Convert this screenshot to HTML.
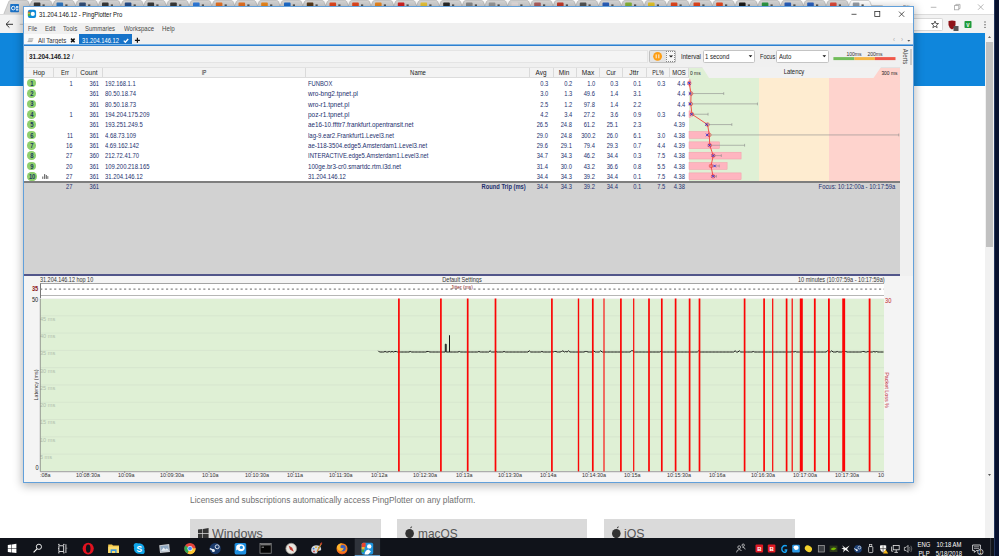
<!DOCTYPE html>
<html><head><meta charset="utf-8"><title>PingPlotter Pro</title>
<style>
html,body{margin:0;padding:0;}
body{width:999px;height:556px;overflow:hidden;position:relative;background:#fff;font-family:"Liberation Sans",sans-serif;}
div{box-sizing:border-box;}
svg{position:absolute;left:0;top:0;}
</style></head><body>

<!-- browser behind -->
<div style="position:absolute;left:0.00px;top:0.00px;width:994.00px;height:15.00px;background:#ffffff;"></div>
<svg width="999" height="16" viewBox="0 0 999 16"><path d="M3.4 15 L8.8 1.6 Q9.3 0.5 10.6 0.5 L26.4 0.5 Q27.7 0.5 28.2 1.6 L33.6 15 Z" fill="#d6d6d6" stroke="#a4a4a4" stroke-width="0.5"/><rect x="10.2" y="4" width="8.8" height="8.2" rx="0.8" fill="#1a72c7"/><circle cx="13.3" cy="8.1" r="1.8" fill="none" stroke="#fff" stroke-width="0.9"/><rect x="16" y="6" width="2.4" height="2" fill="#cfe4f8"/><rect x="16" y="8.6" width="2.4" height="2" fill="#cfe4f8"/><path d="M26.1 15 L31.5 1.6 Q32.0 0.5 33.4 0.5 L49.1 0.5 Q50.5 0.5 51.0 1.6 L56.3 15 Z" fill="#d6d6d6" stroke="#a4a4a4" stroke-width="0.5"/><rect x="33.8" y="2.6" width="6.6" height="4.6" rx="0.8" fill="#3a3a3a"/><rect x="42.5" y="4.4" width="2.2" height="1.6" fill="#555"/><path d="M48.9 15 L54.3 1.6 Q54.8 0.5 56.1 0.5 L71.9 0.5 Q73.2 0.5 73.7 1.6 L79.1 15 Z" fill="#d6d6d6" stroke="#a4a4a4" stroke-width="0.5"/><rect x="56.5" y="2.6" width="6.6" height="4.6" rx="0.8" fill="#2f78c4"/><rect x="65.3" y="4.4" width="2.2" height="1.6" fill="#555"/><path d="M71.7 15 L77.1 1.6 Q77.6 0.5 78.9 0.5 L94.7 0.5 Q96.0 0.5 96.5 1.6 L101.9 15 Z" fill="#d6d6d6" stroke="#a4a4a4" stroke-width="0.5"/><rect x="79.2" y="2.6" width="6.6" height="4.6" rx="0.8" fill="#34507a"/><rect x="88.1" y="4.4" width="2.2" height="1.6" fill="#555"/><path d="M94.4 15 L99.8 1.6 Q100.3 0.5 101.6 0.5 L117.4 0.5 Q118.7 0.5 119.2 1.6 L124.6 15 Z" fill="#d6d6d6" stroke="#a4a4a4" stroke-width="0.5"/><rect x="102.0" y="2.6" width="6.6" height="4.6" rx="0.8" fill="#3a3a3a"/><rect x="110.8" y="4.4" width="2.2" height="1.6" fill="#555"/><path d="M117.2 15 L122.6 1.6 Q123.1 0.5 124.4 0.5 L140.2 0.5 Q141.5 0.5 142.0 1.6 L147.3 15 Z" fill="#d6d6d6" stroke="#a4a4a4" stroke-width="0.5"/><rect x="124.8" y="2.6" width="6.6" height="4.6" rx="0.8" fill="#27508f"/><rect x="133.6" y="4.4" width="2.2" height="1.6" fill="#555"/><path d="M139.9 15 L145.3 1.6 Q145.8 0.5 147.1 0.5 L162.9 0.5 Q164.2 0.5 164.7 1.6 L170.1 15 Z" fill="#d6d6d6" stroke="#a4a4a4" stroke-width="0.5"/><rect x="147.5" y="2.6" width="6.6" height="4.6" rx="0.8" fill="#3a3a3a"/><rect x="156.3" y="4.4" width="2.2" height="1.6" fill="#555"/><path d="M162.7 15 L168.1 1.6 Q168.6 0.5 169.8 0.5 L185.7 0.5 Q187.0 0.5 187.5 1.6 L192.8 15 Z" fill="#d6d6d6" stroke="#a4a4a4" stroke-width="0.5"/><rect x="170.2" y="2.6" width="6.6" height="4.6" rx="0.8" fill="#3a3a3a"/><rect x="179.1" y="4.4" width="2.2" height="1.6" fill="#555"/><path d="M185.4 15 L190.8 1.6 Q191.3 0.5 192.6 0.5 L208.4 0.5 Q209.7 0.5 210.2 1.6 L215.6 15 Z" fill="#d6d6d6" stroke="#a4a4a4" stroke-width="0.5"/><rect x="193.0" y="2.6" width="6.6" height="4.6" rx="0.8" fill="#2f7de0"/><rect x="201.8" y="4.4" width="2.2" height="1.6" fill="#555"/><path d="M208.2 15 L213.6 1.6 Q214.1 0.5 215.3 0.5 L231.2 0.5 Q232.5 0.5 233.0 1.6 L238.3 15 Z" fill="#d6d6d6" stroke="#a4a4a4" stroke-width="0.5"/><rect x="215.8" y="2.6" width="6.6" height="4.6" rx="0.8" fill="#ea7424"/><rect x="224.6" y="4.4" width="2.2" height="1.6" fill="#555"/><path d="M230.9 15 L236.3 1.6 Q236.8 0.5 238.1 0.5 L253.9 0.5 Q255.2 0.5 255.7 1.6 L261.1 15 Z" fill="#d6d6d6" stroke="#a4a4a4" stroke-width="0.5"/><rect x="238.5" y="2.6" width="6.6" height="4.6" rx="0.8" fill="#ea7424"/><rect x="247.3" y="4.4" width="2.2" height="1.6" fill="#555"/><path d="M253.7 15 L259.1 1.6 Q259.6 0.5 260.9 0.5 L276.6 0.5 Q277.9 0.5 278.4 1.6 L283.9 15 Z" fill="#d6d6d6" stroke="#a4a4a4" stroke-width="0.5"/><rect x="261.2" y="2.6" width="6.6" height="4.6" rx="0.8" fill="#f08a1c"/><rect x="270.1" y="4.4" width="2.2" height="1.6" fill="#555"/><path d="M276.4 15 L281.8 1.6 Q282.3 0.5 283.6 0.5 L299.4 0.5 Q300.7 0.5 301.2 1.6 L306.6 15 Z" fill="#d6d6d6" stroke="#a4a4a4" stroke-width="0.5"/><rect x="284.0" y="2.6" width="6.6" height="4.6" rx="0.8" fill="#1f6fd0"/><rect x="292.8" y="4.4" width="2.2" height="1.6" fill="#555"/><path d="M299.1 15 L304.5 1.6 Q305.0 0.5 306.3 0.5 L322.1 0.5 Q323.4 0.5 323.9 1.6 L329.3 15 Z" fill="#d6d6d6" stroke="#a4a4a4" stroke-width="0.5"/><rect x="306.8" y="2.6" width="6.6" height="4.6" rx="0.8" fill="#5a3a1a"/><rect x="315.5" y="4.4" width="2.2" height="1.6" fill="#555"/><path d="M321.9 15 L327.3 1.6 Q327.8 0.5 329.1 0.5 L344.9 0.5 Q346.2 0.5 346.7 1.6 L352.1 15 Z" fill="#d6d6d6" stroke="#a4a4a4" stroke-width="0.5"/><rect x="329.5" y="2.6" width="6.6" height="4.6" rx="0.8" fill="#e8481f"/><rect x="338.3" y="4.4" width="2.2" height="1.6" fill="#555"/><path d="M344.6 15 L350.0 1.6 Q350.5 0.5 351.8 0.5 L367.6 0.5 Q368.9 0.5 369.4 1.6 L374.8 15 Z" fill="#d6d6d6" stroke="#a4a4a4" stroke-width="0.5"/><rect x="352.2" y="2.6" width="6.6" height="4.6" rx="0.8" fill="#e8481f"/><rect x="361.0" y="4.4" width="2.2" height="1.6" fill="#555"/><path d="M367.4 15 L372.8 1.6 Q373.3 0.5 374.6 0.5 L390.4 0.5 Q391.7 0.5 392.2 1.6 L397.6 15 Z" fill="#d6d6d6" stroke="#a4a4a4" stroke-width="0.5"/><rect x="375.0" y="2.6" width="6.6" height="4.6" rx="0.8" fill="#ee8a22"/><rect x="383.8" y="4.4" width="2.2" height="1.6" fill="#555"/><path d="M390.1 15 L395.5 1.6 Q396.0 0.5 397.3 0.5 L413.1 0.5 Q414.4 0.5 414.9 1.6 L420.3 15 Z" fill="#d6d6d6" stroke="#a4a4a4" stroke-width="0.5"/><rect x="397.8" y="2.6" width="6.6" height="4.6" rx="0.8" fill="#d62222"/><rect x="406.5" y="4.4" width="2.2" height="1.6" fill="#555"/><path d="M412.9 15 L418.3 1.6 Q418.8 0.5 420.1 0.5 L435.9 0.5 Q437.2 0.5 437.7 1.6 L443.1 15 Z" fill="#d6d6d6" stroke="#a4a4a4" stroke-width="0.5"/><rect x="420.5" y="2.6" width="6.6" height="4.6" rx="0.8" fill="#ecc83a"/><rect x="429.3" y="4.4" width="2.2" height="1.6" fill="#555"/><path d="M435.6 15 L441.0 1.6 Q441.5 0.5 442.8 0.5 L458.6 0.5 Q459.9 0.5 460.4 1.6 L465.8 15 Z" fill="#d6d6d6" stroke="#a4a4a4" stroke-width="0.5"/><rect x="443.2" y="2.6" width="6.6" height="4.6" rx="0.8" fill="#2a2a2a"/><rect x="452.0" y="4.4" width="2.2" height="1.6" fill="#555"/><path d="M458.4 15 L463.8 1.6 Q464.3 0.5 465.6 0.5 L481.4 0.5 Q482.7 0.5 483.2 1.6 L488.6 15 Z" fill="#d6d6d6" stroke="#a4a4a4" stroke-width="0.5"/><rect x="466.0" y="2.6" width="6.6" height="4.6" rx="0.8" fill="#8a8a8a"/><rect x="474.8" y="4.4" width="2.2" height="1.6" fill="#555"/><path d="M481.1 15 L486.5 1.6 Q487.0 0.5 488.3 0.5 L504.1 0.5 Q505.4 0.5 505.9 1.6 L511.3 15 Z" fill="#d6d6d6" stroke="#a4a4a4" stroke-width="0.5"/><rect x="488.8" y="2.6" width="6.6" height="4.6" rx="0.8" fill="#9a9a9a"/><rect x="497.5" y="4.4" width="2.2" height="1.6" fill="#555"/><path d="M503.9 15 L509.3 1.6 Q509.8 0.5 511.1 0.5 L526.9 0.5 Q528.2 0.5 528.7 1.6 L534.1 15 Z" fill="#d6d6d6" stroke="#a4a4a4" stroke-width="0.5"/><rect x="511.5" y="2.6" width="6.6" height="4.6" rx="0.8" fill="#e8e0e0"/><rect x="520.3" y="4.4" width="2.2" height="1.6" fill="#555"/><path d="M526.6 15 L532.0 1.6 Q532.5 0.5 533.9 0.5 L549.6 0.5 Q550.9 0.5 551.4 1.6 L556.9 15 Z" fill="#d6d6d6" stroke="#a4a4a4" stroke-width="0.5"/><rect x="534.2" y="2.6" width="6.6" height="4.6" rx="0.8" fill="#b06060"/><rect x="543.0" y="4.4" width="2.2" height="1.6" fill="#555"/><path d="M549.4 15 L554.8 1.6 Q555.3 0.5 556.6 0.5 L572.4 0.5 Q573.7 0.5 574.2 1.6 L579.6 15 Z" fill="#d6d6d6" stroke="#a4a4a4" stroke-width="0.5"/><rect x="557.0" y="2.6" width="6.6" height="4.6" rx="0.8" fill="#c63b2b"/><rect x="565.8" y="4.4" width="2.2" height="1.6" fill="#555"/><path d="M572.1 15 L577.5 1.6 Q578.0 0.5 579.4 0.5 L595.1 0.5 Q596.4 0.5 596.9 1.6 L602.4 15 Z" fill="#d6d6d6" stroke="#a4a4a4" stroke-width="0.5"/><rect x="579.8" y="2.6" width="6.6" height="4.6" rx="0.8" fill="#555"/><rect x="588.5" y="4.4" width="2.2" height="1.6" fill="#555"/><path d="M594.9 15 L600.3 1.6 Q600.8 0.5 602.1 0.5 L617.9 0.5 Q619.2 0.5 619.7 1.6 L625.1 15 Z" fill="#d6d6d6" stroke="#a4a4a4" stroke-width="0.5"/><rect x="602.5" y="2.6" width="6.6" height="4.6" rx="0.8" fill="#2a62c0"/><rect x="611.3" y="4.4" width="2.2" height="1.6" fill="#555"/><path d="M617.6 15 L623.0 1.6 Q623.5 0.5 624.9 0.5 L640.6 0.5 Q641.9 0.5 642.4 1.6 L647.9 15 Z" fill="#d6d6d6" stroke="#a4a4a4" stroke-width="0.5"/><rect x="625.2" y="2.6" width="6.6" height="4.6" rx="0.8" fill="#8ab83a"/><rect x="634.0" y="4.4" width="2.2" height="1.6" fill="#555"/><path d="M640.4 15 L645.8 1.6 Q646.3 0.5 647.6 0.5 L663.4 0.5 Q664.7 0.5 665.2 1.6 L670.6 15 Z" fill="#d6d6d6" stroke="#a4a4a4" stroke-width="0.5"/><rect x="648.0" y="2.6" width="6.6" height="4.6" rx="0.8" fill="#e8c82a"/><rect x="656.8" y="4.4" width="2.2" height="1.6" fill="#555"/><path d="M663.1 15 L668.5 1.6 Q669.0 0.5 670.4 0.5 L686.1 0.5 Q687.4 0.5 687.9 1.6 L693.4 15 Z" fill="#d6d6d6" stroke="#a4a4a4" stroke-width="0.5"/><rect x="670.8" y="2.6" width="6.6" height="4.6" rx="0.8" fill="#e8481f"/><rect x="679.5" y="4.4" width="2.2" height="1.6" fill="#555"/><path d="M685.9 15 L691.3 1.6 Q691.8 0.5 693.1 0.5 L708.9 0.5 Q710.2 0.5 710.7 1.6 L716.1 15 Z" fill="#d6d6d6" stroke="#a4a4a4" stroke-width="0.5"/><rect x="693.5" y="2.6" width="6.6" height="4.6" rx="0.8" fill="#e8481f"/><rect x="702.3" y="4.4" width="2.2" height="1.6" fill="#555"/><path d="M708.6 15 L714.0 1.6 Q714.5 0.5 715.9 0.5 L731.6 0.5 Q732.9 0.5 733.4 1.6 L738.9 15 Z" fill="#d6d6d6" stroke="#a4a4a4" stroke-width="0.5"/><rect x="716.2" y="2.6" width="6.6" height="4.6" rx="0.8" fill="#e8481f"/><rect x="725.0" y="4.4" width="2.2" height="1.6" fill="#555"/><path d="M731.4 15 L736.8 1.6 Q737.3 0.5 738.6 0.5 L754.4 0.5 Q755.7 0.5 756.2 1.6 L761.6 15 Z" fill="#d6d6d6" stroke="#a4a4a4" stroke-width="0.5"/><rect x="739.0" y="2.6" width="6.6" height="4.6" rx="0.8" fill="#1a1a1a"/><rect x="747.8" y="4.4" width="2.2" height="1.6" fill="#555"/><path d="M754.1 15 L759.5 1.6 Q760.0 0.5 761.4 0.5 L777.1 0.5 Q778.4 0.5 778.9 1.6 L784.4 15 Z" fill="#d6d6d6" stroke="#a4a4a4" stroke-width="0.5"/><rect x="761.8" y="2.6" width="6.6" height="4.6" rx="0.8" fill="#2e9a46"/><rect x="770.5" y="4.4" width="2.2" height="1.6" fill="#555"/><path d="M776.9 15 L782.3 1.6 Q782.8 0.5 784.1 0.5 L799.9 0.5 Q801.2 0.5 801.7 1.6 L807.1 15 Z" fill="#d6d6d6" stroke="#a4a4a4" stroke-width="0.5"/><rect x="784.5" y="2.6" width="6.6" height="4.6" rx="0.8" fill="#2a62c0"/><rect x="793.3" y="4.4" width="2.2" height="1.6" fill="#555"/><path d="M799.6 15 L805.0 1.6 Q805.5 0.5 806.9 0.5 L822.6 0.5 Q823.9 0.5 824.4 1.6 L829.9 15 Z" fill="#d6d6d6" stroke="#a4a4a4" stroke-width="0.5"/><rect x="807.2" y="2.6" width="6.6" height="4.6" rx="0.8" fill="#2a62c0"/><rect x="816.0" y="4.4" width="2.2" height="1.6" fill="#555"/><path d="M822.4 15 L827.8 1.6 Q828.3 0.5 829.6 0.5 L845.4 0.5 Q846.7 0.5 847.2 1.6 L852.6 15 Z" fill="#d6d6d6" stroke="#a4a4a4" stroke-width="0.5"/><rect x="830.0" y="2.6" width="6.6" height="4.6" rx="0.8" fill="#e04a3a"/><rect x="838.8" y="4.4" width="2.2" height="1.6" fill="#555"/><path d="M845.1 15 L850.5 1.6 Q851.0 0.5 852.4 0.5 L868.1 0.5 Q869.4 0.5 869.9 1.6 L875.4 15 Z" fill="#ffffff" stroke="#a4a4a4" stroke-width="0.5"/><rect x="852.8" y="2.6" width="6.6" height="4.6" rx="0.8" fill="#9aa0a8"/><rect x="861.5" y="4.4" width="2.2" height="1.6" fill="#555"/><path d="M871.5 5 L882.5 5 L884.5 10.5 L873.5 10.5 Z" fill="#cfcfcf"/></svg>
<div style="position:absolute;top:3.81px;height:7.77px;line-height:7.77px;font-size:5.98px;color:#888;white-space:nowrap;left:903.00px;transform-origin:0 50%;transform:scaleX(0.87);">Filip</div>
<div style="position:absolute;left:0.00px;top:14.00px;width:994.00px;height:19.40px;background:#f2f2f2;border-top:0.8px solid #dcdcdc;"></div>
<div style="position:absolute;left:0.00px;top:33.30px;width:985.00px;height:52.30px;background:#0f86dc;"></div>
<div style="position:absolute;left:985.00px;top:33.30px;width:9.00px;height:504.50px;background:#f1f1f1;"></div>
<div style="position:absolute;left:986.00px;top:42.00px;width:7.20px;height:204.60px;background:#c1c1c1;"></div>
<div style="position:absolute;left:994.00px;top:0.00px;width:5.00px;height:556.00px;background:#07112e;border-left:0.8px solid #24365c;"></div>
<svg width="999" height="16" viewBox="0 0 999 16"><g stroke="#a6a6a6" stroke-width="0.8" fill="none"><path d="M930.8 7.3 L936.4 7.3"/><rect x="954.6" y="5.6" width="4.2" height="4.2" fill="#fff"/><path d="M955.8 5.6 L955.8 4.4 L960 4.4 L960 8.6 L958.8 8.6"/><path d="M978 4.4 L983.4 9.8 M983.4 4.4 L978 9.8"/></g></svg>
<div style="position:absolute;left:900.00px;top:17.50px;width:42.50px;height:13.50px;background:#fff;border:1px solid #d8d8d8;border-left:none;border-radius:0 2px 2px 0;"></div>
<svg width="999" height="40" viewBox="0 0 999 40"><polygon points="935.00,21.00 935.91,23.45 938.52,23.56 936.47,25.18 937.17,27.69 935.00,26.25 932.83,27.69 933.53,25.18 931.48,23.56 934.09,23.45" fill="none" stroke="#3a3a3a" stroke-width="0.8" stroke-linejoin="round"/></svg>
<svg width="999" height="40" viewBox="0 0 999 40"><path d="M948.5 21 Q952 20 955.5 21 L955.5 25 Q955 28 952 29.5 Q949 28 948.5 25 Z" fill="#8e1318"/><rect x="953.5" y="26" width="5" height="5" fill="#555"/><rect x="964.5" y="21" width="7" height="7" rx="0.8" fill="#1f9b3a"/><circle cx="985" cy="22" r="0.7" fill="#555"/><circle cx="985" cy="24.7" r="0.7" fill="#555"/><circle cx="985" cy="27.4" r="0.7" fill="#555"/><path d="M9.4 21 L6 24.3 L9.4 27.6 M6 24.3 L13 24.3" stroke="#333" stroke-width="1" fill="none"/><path d="M19.8 24.3 L23 24.3" stroke="#bbb" stroke-width="0.9"/><path d="M988 38 L989.5 36 L991 38Z" fill="#666"/></svg>
<div style="position:absolute;top:21.66px;height:7.48px;line-height:7.48px;font-size:5.75px;color:#fff;white-space:nowrap;font-weight:bold;left:818.00px;width:300px;text-align:center;transform-origin:50% 50%;transform:scaleX(0.87);">V</div>
<div style="position:absolute;top:494.81px;height:10.79px;line-height:10.79px;font-size:8.3px;color:#707070;white-space:nowrap;left:190.00px;transform-origin:0 50%;transform:scaleX(1.0079);">Licenses and subscriptions automatically access PingPlotter on any platform.</div>
<div style="position:absolute;left:190.20px;top:519.00px;width:190.70px;height:19.00px;background:#dadada;"></div>
<div style="position:absolute;top:524.72px;height:17.16px;line-height:17.16px;font-size:13.2px;color:#555;white-space:nowrap;left:211.80px;transform-origin:0 50%;transform:scaleX(0.9487);">Windows</div>
<div style="position:absolute;left:396.80px;top:519.00px;width:190.70px;height:19.00px;background:#dadada;"></div>
<div style="position:absolute;top:524.72px;height:17.16px;line-height:17.16px;font-size:13.2px;color:#555;white-space:nowrap;left:417.60px;transform-origin:0 50%;transform:scaleX(0.8998);">macOS</div>
<div style="position:absolute;left:604.40px;top:519.00px;width:190.70px;height:19.00px;background:#dadada;"></div>
<div style="position:absolute;top:524.72px;height:17.16px;line-height:17.16px;font-size:13.2px;color:#555;white-space:nowrap;left:624.20px;transform-origin:0 50%;transform:scaleX(0.9362);">iOS</div>
<svg width="999" height="556" viewBox="0 0 999 556"><g fill="#333"><path d="M198 529.6 L202.4 529 L202.4 533.3 L198 533.3Z M203 528.9 L208.6 528.1 L208.6 533.3 L203 533.3Z M198 533.9 L202.4 533.9 L202.4 538 L198 538Z M203 533.9 L208.6 533.9 L208.6 538 L203 538Z"/><ellipse cx="409.6" cy="533.6" rx="4.3" ry="4.6"/><path d="M410 528.5 Q410.3 526.6 412.2 526.2 Q412 528.2 410 528.5Z"/><ellipse cx="616.3" cy="533.6" rx="4.3" ry="4.6"/><path d="M616.7 528.5 Q617 526.6 618.9 526.2 Q618.7 528.2 616.7 528.5Z"/></g><path d="M988 474 L991 474 L989.5 476Z" fill="#555"/></svg>
<div style="position:absolute;left:0.00px;top:538.40px;width:994.00px;height:17.60px;background:#10131a;"></div>
<svg width="999" height="556" viewBox="0 0 999 556"><rect x="354.7" y="538.4" width="25.4" height="17.6" fill="#2f333b"/><rect x="354.7" y="555.2" width="25.4" height="0.8" fill="#76b9ed"/><g fill="#fff"><path d="M7.8 545 L11.4 544.5 L11.4 548.2 L7.8 548.2Z M11.9 544.4 L16.4 543.8 L16.4 548.2 L11.9 548.2Z M7.8 548.8 L11.4 548.8 L11.4 552.4 L7.8 551.9Z M11.9 548.8 L16.4 548.8 L16.4 553.1 L11.9 552.5Z"/></g><circle cx="38.9" cy="546.8" r="2.6" fill="none" stroke="#fff" stroke-width="0.9"/><path d="M37 548.8 L33.6 552.4" stroke="#fff" stroke-width="1.1"/><g stroke="#fff" stroke-width="0.8" fill="none"><rect x="58.9" y="545.8" width="4.8" height="5.6"/><path d="M58 544.4 L59.6 544.4 M63 544.4 L64.6 544.4 M58 552.8 L59.6 552.8 M63 552.8 L64.6 552.8 M58 548.6 L58.9 548.6 M65.9 544.2 L65.9 553 M66.6 548.2 L67.2 548.2"/></g><ellipse cx="88.2" cy="548.6" rx="5.6" ry="5.8" fill="#e3121f"/><ellipse cx="88.2" cy="548.6" rx="2.3" ry="4.2" fill="#10131a"/><path d="M108.2 544.6 L112 544.6 L113 545.6 L119 545.6 L119 553 L108.2 553Z" fill="#f6c94a"/><rect x="108.2" y="546.6" width="10.8" height="6.4" fill="#fbdc6f"/><rect x="110.6" y="549.3" width="6" height="3.7" fill="#3d9be0"/><rect x="112" y="551" width="3.2" height="2" fill="#fbdc6f"/><circle cx="139.2" cy="548.5" r="5.3" fill="#10a6ea"/><circle cx="136.3" cy="545.6" r="2.6" fill="#10a6ea"/><circle cx="142.1" cy="551.4" r="2.6" fill="#10a6ea"/><text x="139.2" y="551.5" font-size="8.4" font-weight="bold" text-anchor="middle" fill="#fff" font-family="Liberation Sans, sans-serif">S</text><rect x="159.6" y="544.6" width="10" height="8" fill="#c9cdd2" transform="rotate(-6 164.6 548.6)"/><rect x="160.6" y="545.6" width="8" height="5.4" fill="#8fa8c2" transform="rotate(-6 164.6 548.6)"/><path d="M161 551 L163.6 547.6 L165.4 549.6 L166.8 548.2 L169 550.6Z" fill="#e9eef2"/><circle cx="190" cy="548.5" r="5.6" fill="#e5443a"/><path d="M190 548.5 L185.2 545.6 A5.6 5.6 0 0 0 187.6 553.6Z" fill="#2da94f"/><path d="M190 548.5 L187.6 553.6 A5.6 5.6 0 0 0 195.6 548.2Z" fill="#fcc934"/><circle cx="190" cy="548.5" r="2.5" fill="#fff"/><circle cx="190" cy="548.5" r="1.9" fill="#4a8af4"/><circle cx="215.2" cy="548.6" r="5.6" fill="#1a3a6b"/><circle cx="217.2" cy="546.8" r="2" fill="none" stroke="#e8eef5" stroke-width="0.9"/><circle cx="213.4" cy="550.6" r="1.5" fill="#e8eef5"/><path d="M209.8 548.6 L213.4 550.2" stroke="#e8eef5" stroke-width="1.4"/><rect x="234.6" y="543" width="11.6" height="11.4" rx="1.6" fill="#1e8fe0"/><path d="M236.2 547.4 Q236 544.4 240 544.2 Q244.8 544.2 244.8 548 Q244.6 551 241 551.2 Q238 551 237.8 549.4 L236.2 550.6Z" fill="#fff"/><circle cx="241.4" cy="547.4" r="1.6" fill="#1e8fe0"/><rect x="260" y="543.6" width="11.2" height="9.6" fill="#050505" stroke="#9a9a9a" stroke-width="0.7"/><rect x="260.4" y="543.9" width="10.4" height="1.5" fill="#777"/><path d="M261.6 547.2 L264 547.2" stroke="#ddd" stroke-width="0.7"/><circle cx="291.2" cy="548.6" r="5.3" fill="#e9e6df" stroke="#9d9a94" stroke-width="0.8"/><path d="M288.6 545.6 L292.2 547.8 L293.8 551.8 L290 549.4Z" fill="#c23a2f"/><path d="M311.2 550.2 Q311 545.6 316 545.2 Q321.4 545.4 321.2 549.4 Q320.8 551.2 318.4 550.8 Q317 550.8 317.4 552.2 Q317.4 553.8 315 553.6 Q311.4 553.2 311.2 550.2Z" fill="#cfd6de"/><circle cx="313.6" cy="548.6" r="0.9" fill="#3a78d0"/><circle cx="316" cy="547.2" r="0.9" fill="#e0b030"/><circle cx="318.8" cy="547.8" r="0.9" fill="#48a848"/><circle cx="314" cy="551.4" r="0.9" fill="#d04040"/><path d="M317 551.6 L321.2 543.6" stroke="#d08a30" stroke-width="1.2"/><path d="M320.6 544.6 L321.8 542.6" stroke="#c0392b" stroke-width="1.3"/><circle cx="342" cy="548.7" r="5.5" fill="#f57c1a"/><circle cx="342.6" cy="548.2" r="3.1" fill="#3a5fc0"/><path d="M336.8 547 Q338 543.4 342 543.2 Q339.6 545.4 340.4 547.6 Q342 548.6 343.6 547.8 Q343.4 550.8 340.6 551 Q337.4 550.6 336.8 547Z" fill="#ffb52e"/><path d="M337 551 Q342 556 347 551 Q346 553.8 342 554.2 Q338.6 554 337 551Z" fill="#e8402a"/><rect x="361.6" y="542.8" width="11.6" height="11.6" rx="1.6" fill="#1e94dd"/><path d="M361.6 544.4 Q361.6 542.8 363.2 542.8 L365.6 542.8 L365.6 547 L361.6 547Z" fill="#e9452c"/><rect x="361.6" y="547" width="3" height="2.6" fill="#f4b62f"/><rect x="361.6" y="549.6" width="2.4" height="2.6" fill="#47a844"/><circle cx="369.2" cy="546.4" r="2.2" fill="#fff"/><path d="M364.6 554.4 Q365 549.8 368.6 549.4 L371 551.6 L368.2 554.4Z" fill="#fff"/><g stroke="#e6e6e6" stroke-width="0.7" fill="none"><circle cx="739.2" cy="547.2" r="1.4"/><path d="M736.6 552.4 Q736.8 549.6 739.2 549.6 Q741 549.6 741.4 551"/><circle cx="743.2" cy="545.2" r="1.2"/><path d="M742.4 547.4 Q744.8 547 745.2 549.4"/></g><rect x="755.5" y="544.6" width="7.6" height="8" rx="1" fill="#e01b24"/><text x="759.3" y="551" font-size="6" font-weight="bold" text-anchor="middle" fill="#fff" font-family="Liberation Sans, sans-serif">B</text><rect x="767.8000000000001" y="544.6" width="7.6" height="8" rx="1" fill="#e01b24"/><text x="771.6" y="551" font-size="6" font-weight="bold" text-anchor="middle" fill="#fff" font-family="Liberation Sans, sans-serif">B</text><path d="M786.8 546 Q783.8 544.6 782 547.6 Q781.2 551 784 552.2 Q786.4 552.6 786.6 550 L784.6 550" stroke="#17a2f2" stroke-width="1.4" fill="none"/><rect x="792.2" y="544.8" width="7.6" height="7.6" rx="1" fill="#2a98e4"/><path d="M793.4 547.6 Q793.6 545.6 796 545.6 Q798.8 545.8 798.6 548.2 Q798.2 550 796 550 Q794.6 550 794.4 549Z" fill="#fff"/><ellipse cx="808.4" cy="548.8" rx="3.8" ry="3" fill="#f3d22b" transform="rotate(35 808.4 548.8)"/><rect x="818.3" y="545.4" width="6" height="6.6" fill="#3a3d42" stroke="#a8a8a8" stroke-width="0.7"/><rect x="829.6" y="545.6" width="7.8" height="6.4" fill="#2d3a1c"/><path d="M830.6 549 Q833.4 546 836.4 548.6 Q833.4 551.6 830.6 549Z" fill="#76b900"/><path d="M842 545.2 L845.6 548 L849.6 545.6 L847 549 L849.4 552.2 L845.4 550 L843 552.4 L843.8 549.4 L841.4 548.4 L843.6 547.8Z" fill="#f2f2f2"/><circle cx="858" cy="548.8" r="3.9" fill="#1c3f74"/><circle cx="859.4" cy="547.6" r="1.4" fill="none" stroke="#e8eef5" stroke-width="0.7"/><circle cx="856.8" cy="550.2" r="1" fill="#e8eef5"/><path d="M854.2 548.6 L856.8 550" stroke="#e8eef5" stroke-width="1"/><rect x="868.6" y="546.6" width="4.2" height="6" rx="0.8" fill="none" stroke="#dcdcdc" stroke-width="0.8"/><rect x="869.6" y="544.4" width="2.2" height="2.2" fill="none" stroke="#dcdcdc" stroke-width="0.7"/><path d="M880 545.4 Q883 544.8 886.2 545.4 L886.2 549 Q885.6 551.6 883.1 552.8 Q880.6 551.6 880 549Z" fill="#f4f4f4"/><path d="M883.1 545 L883.1 552.8 M880 548.6 L886.2 548.6" stroke="#333" stroke-width="0.6"/><path d="M885.6 549.6 L888.2 553.6 L883 553.6Z" fill="#f3b71c"/><g stroke="#e6e6e6" stroke-width="0.8" fill="none"><rect x="893.2" y="545.4" width="6" height="4.4"/><path d="M894.4 552.4 L898 552.4 M896.2 549.8 L896.2 552.4 M891.6 546.6 L891.6 551.2 L893.2 551.2"/></g><path d="M904.4 547.4 L906 547.4 L908 545.4 L908 552.4 L906 550.4 L904.4 550.4Z" fill="none" stroke="#e6e6e6" stroke-width="0.7"/><path d="M909.4 547 Q910.6 548.9 909.4 550.8 M910.8 545.8 Q912.8 548.9 910.8 552" stroke="#9a9a9a" stroke-width="0.6" fill="none"/><path d="M972.6 545 L980.4 545 L980.4 550.6 L976.2 550.6 L974.4 552.4 L974.4 550.6 L972.6 550.6Z" fill="none" stroke="#f0f0f0" stroke-width="0.8"/><path d="M974 546.8 L979 546.8 M974 548.4 L979 548.4" stroke="#f0f0f0" stroke-width="0.6"/><circle cx="980.4" cy="552" r="2.7" fill="#10131a" stroke="#f0f0f0" stroke-width="0.7"/><text x="980.4" y="553.8" font-size="4.6" text-anchor="middle" fill="#fff" font-family="Liberation Sans, sans-serif">1</text><path d="M990.6 538 L990.6 556" stroke="#555a62" stroke-width="0.6"/></svg>
<div style="position:absolute;top:540.99px;height:8.83px;line-height:8.83px;font-size:6.79px;color:#fff;white-space:nowrap;left:773.50px;width:300px;text-align:center;transform-origin:50% 50%;transform:scaleX(0.87);">ENG</div>
<div style="position:absolute;top:550.09px;height:8.83px;line-height:8.83px;font-size:6.79px;color:#fff;white-space:nowrap;left:773.50px;width:300px;text-align:center;transform-origin:50% 50%;transform:scaleX(0.87);">PLP</div>
<div style="position:absolute;top:540.78px;height:8.83px;line-height:8.83px;font-size:6.79px;color:#fff;white-space:nowrap;left:799.30px;width:300px;text-align:center;transform-origin:50% 50%;transform:scaleX(0.87);">10:18 AM</div>
<div style="position:absolute;top:550.09px;height:8.83px;line-height:8.83px;font-size:6.79px;color:#fff;white-space:nowrap;left:799.30px;width:300px;text-align:center;transform-origin:50% 50%;transform:scaleX(0.87);">5/18/2018</div>
<!-- window -->
<div style="position:absolute;left:17.90px;top:2.90px;width:901.40px;height:487.20px;background:transparent;box-shadow:0 2px 9px 1px rgba(0,0,0,0.28);left:22.9px;top:5.9px;width:891.4px;height:477.2px;"></div>
<div style="position:absolute;left:22.90px;top:5.90px;width:891.40px;height:477.20px;background:#f0f0f0;border:1.3px solid #62a0da;"></div>
<div style="position:absolute;left:24.20px;top:7.20px;width:888.80px;height:15.50px;background:#ffffff;"></div>
<svg width="200" height="30" viewBox="0 0 200 30"><rect x="27.9" y="9.8" width="8.2" height="8.1" rx="1.9" fill="#0c8bd9"/><rect x="27.9" y="11.7" width="2.4" height="1" fill="#f0481e"/><rect x="27.9" y="12.7" width="2.4" height="1.1" fill="#f3c81e"/><rect x="27.9" y="13.8" width="2.4" height="2.1" fill="#4fb53a"/><circle cx="32.8" cy="13.9" r="2.05" fill="#fff"/></svg>
<div style="position:absolute;top:9.95px;height:9.11px;line-height:9.11px;font-size:7.01px;color:#111;white-space:nowrap;left:38.50px;transform-origin:0 50%;transform:scaleX(0.8492);">31.204.146.12 - PingPlotter Pro</div>
<svg width="999" height="30" viewBox="0 0 999 30"><g stroke="#222" stroke-width="0.75" fill="none"><path d="M851.5 14.3 L856.5 14.3"/><rect x="874.8" y="11.6" width="5" height="5"/><path d="M899 11.6 L904.2 16.8 M904.2 11.6 L899 16.8"/></g></svg>
<div style="position:absolute;top:24.91px;height:8.97px;line-height:8.97px;font-size:6.9px;color:#4a4a4a;white-space:nowrap;left:27.60px;transform-origin:0 50%;transform:scaleX(0.8184);">File</div>
<div style="position:absolute;top:24.91px;height:8.97px;line-height:8.97px;font-size:6.9px;color:#4a4a4a;white-space:nowrap;left:44.60px;transform-origin:0 50%;transform:scaleX(0.8831);">Edit</div>
<div style="position:absolute;top:24.91px;height:8.97px;line-height:8.97px;font-size:6.9px;color:#4a4a4a;white-space:nowrap;left:63.00px;transform-origin:0 50%;transform:scaleX(0.8815);">Tools</div>
<div style="position:absolute;top:24.91px;height:8.97px;line-height:8.97px;font-size:6.9px;color:#4a4a4a;white-space:nowrap;left:85.40px;transform-origin:0 50%;transform:scaleX(0.8627);">Summaries</div>
<div style="position:absolute;top:24.91px;height:8.97px;line-height:8.97px;font-size:6.9px;color:#4a4a4a;white-space:nowrap;left:123.70px;transform-origin:0 50%;transform:scaleX(0.8753);">Workspace</div>
<div style="position:absolute;top:24.91px;height:8.97px;line-height:8.97px;font-size:6.9px;color:#4a4a4a;white-space:nowrap;left:161.50px;transform-origin:0 50%;transform:scaleX(0.8949);">Help</div>
<div style="position:absolute;left:24.20px;top:34.20px;width:54.70px;height:9.90px;background:#fafafa;"></div>
<svg width="200" height="50" viewBox="0 0 200 50"><g stroke="#888" stroke-width="0.7"><path d="M28.6 38.8 L33.4 38.8 M28.1 40.2 L32.9 40.2 M27.6 41.6 L32.4 41.6"/></g><path d="M71 38.6 L74.6 42.2 M74.6 38.6 L71 42.2" stroke="#111" stroke-width="1.5"/></svg>
<div style="position:absolute;top:36.81px;height:8.97px;line-height:8.97px;font-size:6.9px;color:#333;white-space:nowrap;left:37.80px;transform-origin:0 50%;transform:scaleX(0.8819);">All Targets</div>
<div style="position:absolute;left:78.90px;top:34.20px;width:52.90px;height:11.30px;background:#1673c9;"></div>
<div style="position:absolute;top:36.81px;height:8.97px;line-height:8.97px;font-size:6.9px;color:#fff;white-space:nowrap;left:82.00px;transform-origin:0 50%;transform:scaleX(0.8362);">31.204.146.12</div>
<svg width="200" height="50" viewBox="0 0 200 50"><path d="M123.8 40.6 L125.3 42.2 L128.2 39" stroke="#fff" stroke-width="1.3" fill="none"/><path d="M134.9 40.3 L139.9 40.3 M137.4 37.8 L137.4 42.8" stroke="#111" stroke-width="1.2"/></svg>
<div style="position:absolute;left:24.20px;top:44.00px;width:888.80px;height:1.90px;background:#2f80cf;border-top:0.7px solid #7fb6e6;"></div>
<div style="position:absolute;top:36.41px;height:8.97px;line-height:8.97px;font-size:6.9px;color:#aaa;white-space:nowrap;left:743.50px;width:300px;text-align:center;transform-origin:50% 50%;transform:scaleX(0.87);">‹</div>
<div style="position:absolute;top:36.41px;height:8.97px;line-height:8.97px;font-size:6.9px;color:#aaa;white-space:nowrap;left:751.50px;width:300px;text-align:center;transform-origin:50% 50%;transform:scaleX(0.87);">›</div>
<svg width="999" height="50" viewBox="0 0 999 50"><path d="M907.3 40 L910.3 40 L908.8 41.8Z" fill="#555"/></svg>
<div style="position:absolute;left:26.00px;top:49.60px;width:621.50px;height:13.20px;background:#f4f4f4;border:1px solid #e4e4e4;"></div>
<div style="position:absolute;top:52.91px;height:8.97px;line-height:8.97px;font-size:6.9px;color:#222;white-space:nowrap;font-weight:bold;left:28.50px;transform-origin:0 50%;transform:scaleX(0.9314);">31.204.146.12</div>
<div style="position:absolute;top:52.91px;height:8.97px;line-height:8.97px;font-size:6.9px;color:#444;white-space:nowrap;left:72.00px;transform-origin:0 50%;transform:scaleX(0.87);">/</div>
<div style="position:absolute;left:649.30px;top:50.00px;width:27.20px;height:12.50px;background:#e4e4e4;border:0.8px solid #bebebe;border-radius:1.6px;"></div>
<div style="position:absolute;left:665.80px;top:51.00px;width:9.40px;height:10.60px;background:#f6f6f6;border:0.6px dotted #888;"></div>
<svg width="999" height="70" viewBox="0 0 999 70"><circle cx="657.6" cy="56.3" r="4.4" fill="#fd9d12"/><rect x="655.7" y="54.4" width="0.9" height="3.9" fill="#fff"/><rect x="658.4" y="54.4" width="0.9" height="3.9" fill="#fff"/><path d="M668.9 55.4 L673.1 55.4 L671 57.4Z" fill="#111"/></svg>
<div style="position:absolute;top:52.71px;height:8.97px;line-height:8.97px;font-size:6.9px;color:#222;white-space:nowrap;left:681.10px;transform-origin:0 50%;transform:scaleX(0.8839);">Interval</div>
<div style="position:absolute;left:702.60px;top:50.00px;width:52.30px;height:12.50px;background:#fff;border:0.8px solid #c4c4c4;border-radius:1.6px;"></div>
<div style="position:absolute;top:52.71px;height:8.97px;line-height:8.97px;font-size:6.9px;color:#222;white-space:nowrap;left:705.40px;transform-origin:0 50%;transform:scaleX(0.8677);">1 second</div>
<div style="position:absolute;top:52.71px;height:8.97px;line-height:8.97px;font-size:6.9px;color:#222;white-space:nowrap;left:760.00px;transform-origin:0 50%;transform:scaleX(0.8143);">Focus</div>
<div style="position:absolute;left:776.40px;top:50.00px;width:52.50px;height:12.50px;background:#fff;border:0.8px solid #c4c4c4;border-radius:1.6px;"></div>
<div style="position:absolute;top:52.71px;height:8.97px;line-height:8.97px;font-size:6.9px;color:#222;white-space:nowrap;left:779.20px;transform-origin:0 50%;transform:scaleX(0.87);">Auto</div>
<svg width="999" height="70" viewBox="0 0 999 70"><path d="M748.7 55.2 L752.3 55.2 L750.5 57.3Z" fill="#111"/><path d="M822.5 55.2 L826.1 55.2 L824.3 57.3Z" fill="#111"/><rect x="833.4" y="57.1" width="21" height="3" fill="#72bd5a"/><rect x="854.4" y="57.1" width="20.5" height="3" fill="#f5b544"/><rect x="874.9" y="57.1" width="20.6" height="3" fill="#f0584a"/></svg>
<div style="position:absolute;top:51.04px;height:7.32px;line-height:7.32px;font-size:5.63px;color:#333;white-space:nowrap;left:704.00px;width:300px;text-align:center;transform-origin:50% 50%;transform:scaleX(0.8995);">100ms</div>
<div style="position:absolute;top:51.04px;height:7.32px;line-height:7.32px;font-size:5.63px;color:#333;white-space:nowrap;left:724.60px;width:300px;text-align:center;transform-origin:50% 50%;transform:scaleX(0.8995);">200ms</div>
<div style="position:absolute;top:52.41px;height:8.97px;line-height:8.97px;font-size:6.9px;color:#444;white-space:nowrap;left:755.20px;width:300px;text-align:center;transform-origin:50% 50%;transform:rotate(90deg) scaleX(0.8731);">Alerts</div>
<div style="position:absolute;left:909.50px;top:49.40px;width:2.30px;height:15.20px;background:#cbcbcb;"></div>
<div style="position:absolute;left:24.20px;top:67.00px;width:875.50px;height:11.00px;background:#f3f3f3;border-top:0.8px solid #e2e2e2;border-bottom:0.7px solid #dcdcdc;"></div>
<div style="position:absolute;left:24.20px;top:78.00px;width:664.60px;height:104.00px;background:#ffffff;"></div>
<div style="position:absolute;left:52.60px;top:68.30px;width:0.80px;height:9.20px;background:#dadada;"></div>
<div style="position:absolute;left:75.80px;top:68.30px;width:0.80px;height:9.20px;background:#dadada;"></div>
<div style="position:absolute;left:101.60px;top:68.30px;width:0.80px;height:9.20px;background:#dadada;"></div>
<div style="position:absolute;left:305.00px;top:68.30px;width:0.80px;height:9.20px;background:#dadada;"></div>
<div style="position:absolute;left:529.10px;top:68.30px;width:0.80px;height:9.20px;background:#dadada;"></div>
<div style="position:absolute;left:552.50px;top:68.30px;width:0.80px;height:9.20px;background:#dadada;"></div>
<div style="position:absolute;left:575.60px;top:68.30px;width:0.80px;height:9.20px;background:#dadada;"></div>
<div style="position:absolute;left:599.00px;top:68.30px;width:0.80px;height:9.20px;background:#dadada;"></div>
<div style="position:absolute;left:622.20px;top:68.30px;width:0.80px;height:9.20px;background:#dadada;"></div>
<div style="position:absolute;left:645.60px;top:68.30px;width:0.80px;height:9.20px;background:#dadada;"></div>
<div style="position:absolute;left:668.80px;top:68.30px;width:0.80px;height:9.20px;background:#dadada;"></div>
<div style="position:absolute;left:688.20px;top:68.30px;width:0.80px;height:9.20px;background:#dadada;"></div>
<div style="position:absolute;top:68.98px;height:8.83px;line-height:8.83px;font-size:6.79px;color:#222;white-space:nowrap;left:-110.70px;width:300px;text-align:center;transform-origin:50% 50%;transform:scaleX(0.9473);">Hop</div>
<div style="position:absolute;top:68.98px;height:8.83px;line-height:8.83px;font-size:6.79px;color:#222;white-space:nowrap;left:-85.00px;width:300px;text-align:center;transform-origin:50% 50%;transform:scaleX(0.8727);">Err</div>
<div style="position:absolute;top:68.98px;height:8.83px;line-height:8.83px;font-size:6.79px;color:#222;white-space:nowrap;left:-60.60px;width:300px;text-align:center;transform-origin:50% 50%;transform:scaleX(0.9548);">Count</div>
<div style="position:absolute;top:68.98px;height:8.83px;line-height:8.83px;font-size:6.79px;color:#222;white-space:nowrap;left:53.50px;width:300px;text-align:center;transform-origin:50% 50%;transform:scaleX(0.7326);">IP</div>
<div style="position:absolute;top:68.98px;height:8.83px;line-height:8.83px;font-size:6.79px;color:#222;white-space:nowrap;left:267.50px;width:300px;text-align:center;transform-origin:50% 50%;transform:scaleX(0.8723);">Name</div>
<div style="position:absolute;top:68.98px;height:8.83px;line-height:8.83px;font-size:6.79px;color:#222;white-space:nowrap;left:391.00px;width:300px;text-align:center;transform-origin:50% 50%;transform:scaleX(0.9414);">Avg</div>
<div style="position:absolute;top:68.98px;height:8.83px;line-height:8.83px;font-size:6.79px;color:#222;white-space:nowrap;left:414.30px;width:300px;text-align:center;transform-origin:50% 50%;transform:scaleX(0.9688);">Min</div>
<div style="position:absolute;top:68.98px;height:8.83px;line-height:8.83px;font-size:6.79px;color:#222;white-space:nowrap;left:437.60px;width:300px;text-align:center;transform-origin:50% 50%;transform:scaleX(0.9667);">Max</div>
<div style="position:absolute;top:68.98px;height:8.83px;line-height:8.83px;font-size:6.79px;color:#222;white-space:nowrap;left:461.00px;width:300px;text-align:center;transform-origin:50% 50%;transform:scaleX(0.8865);">Cur</div>
<div style="position:absolute;top:68.98px;height:8.83px;line-height:8.83px;font-size:6.79px;color:#222;white-space:nowrap;left:484.20px;width:300px;text-align:center;transform-origin:50% 50%;transform:scaleX(0.9863);">Jttr</div>
<div style="position:absolute;top:68.98px;height:8.83px;line-height:8.83px;font-size:6.79px;color:#222;white-space:nowrap;left:507.50px;width:300px;text-align:center;transform-origin:50% 50%;transform:scaleX(0.7948);">PL%</div>
<div style="position:absolute;top:68.98px;height:8.83px;line-height:8.83px;font-size:6.79px;color:#222;white-space:nowrap;left:528.80px;width:300px;text-align:center;transform-origin:50% 50%;transform:scaleX(0.8664);">MOS</div>
<div style="position:absolute;left:27.30px;top:78.90px;width:8.6px;height:8.6px;border-radius:50%;background:#8fcf6e;"></div>
<div style="position:absolute;top:79.78px;height:8.83px;line-height:8.83px;font-size:6.79px;color:#1c3a5e;white-space:nowrap;font-weight:bold;left:-118.40px;width:300px;text-align:center;transform-origin:50% 50%;transform:scaleX(0.87);">1</div>
<div style="position:absolute;top:79.81px;height:8.59px;line-height:8.59px;font-size:6.61px;color:#232f6e;white-space:nowrap;right:926.20px;transform-origin:100% 50%;transform:scaleX(0.87);">1</div>
<div style="position:absolute;top:79.81px;height:8.59px;line-height:8.59px;font-size:6.61px;color:#232f6e;white-space:nowrap;right:900.40px;transform-origin:100% 50%;transform:scaleX(0.87);">361</div>
<div style="position:absolute;top:79.81px;height:8.59px;line-height:8.59px;font-size:6.61px;color:#232f6e;white-space:nowrap;left:105.20px;transform-origin:0 50%;transform:scaleX(0.8763);">192.168.1.1</div>
<div style="position:absolute;top:79.81px;height:8.59px;line-height:8.59px;font-size:6.61px;color:#232f6e;white-space:nowrap;left:307.90px;transform-origin:0 50%;transform:scaleX(0.8822);">FUNBOX</div>
<div style="position:absolute;top:79.81px;height:8.59px;line-height:8.59px;font-size:6.61px;color:#232f6e;white-space:nowrap;right:450.70px;transform-origin:100% 50%;transform:scaleX(0.87);">0.3</div>
<div style="position:absolute;top:79.81px;height:8.59px;line-height:8.59px;font-size:6.61px;color:#232f6e;white-space:nowrap;right:427.30px;transform-origin:100% 50%;transform:scaleX(0.87);">0.2</div>
<div style="position:absolute;top:79.81px;height:8.59px;line-height:8.59px;font-size:6.61px;color:#232f6e;white-space:nowrap;right:403.90px;transform-origin:100% 50%;transform:scaleX(0.87);">1.0</div>
<div style="position:absolute;top:79.81px;height:8.59px;line-height:8.59px;font-size:6.61px;color:#232f6e;white-space:nowrap;right:380.70px;transform-origin:100% 50%;transform:scaleX(0.87);">0.3</div>
<div style="position:absolute;top:79.81px;height:8.59px;line-height:8.59px;font-size:6.61px;color:#232f6e;white-space:nowrap;right:357.50px;transform-origin:100% 50%;transform:scaleX(0.87);">0.1</div>
<div style="position:absolute;top:79.81px;height:8.59px;line-height:8.59px;font-size:6.61px;color:#232f6e;white-space:nowrap;right:334.10px;transform-origin:100% 50%;transform:scaleX(0.87);">0.3</div>
<div style="position:absolute;top:79.81px;height:8.59px;line-height:8.59px;font-size:6.61px;color:#232f6e;white-space:nowrap;right:313.80px;transform-origin:100% 50%;transform:scaleX(0.87);">4.4</div>
<div style="position:absolute;left:27.30px;top:89.25px;width:8.6px;height:8.6px;border-radius:50%;background:#8fcf6e;"></div>
<div style="position:absolute;top:90.13px;height:8.83px;line-height:8.83px;font-size:6.79px;color:#1c3a5e;white-space:nowrap;font-weight:bold;left:-118.40px;width:300px;text-align:center;transform-origin:50% 50%;transform:scaleX(0.87);">2</div>
<div style="position:absolute;top:90.15px;height:8.59px;line-height:8.59px;font-size:6.61px;color:#232f6e;white-space:nowrap;right:900.40px;transform-origin:100% 50%;transform:scaleX(0.87);">361</div>
<div style="position:absolute;top:90.15px;height:8.59px;line-height:8.59px;font-size:6.61px;color:#232f6e;white-space:nowrap;left:105.20px;transform-origin:0 50%;transform:scaleX(0.8906);">80.50.18.74</div>
<div style="position:absolute;top:90.15px;height:8.59px;line-height:8.59px;font-size:6.61px;color:#232f6e;white-space:nowrap;left:307.90px;transform-origin:0 50%;transform:scaleX(0.9789);">wro-bng2.tpnet.pl</div>
<div style="position:absolute;top:90.15px;height:8.59px;line-height:8.59px;font-size:6.61px;color:#232f6e;white-space:nowrap;right:450.70px;transform-origin:100% 50%;transform:scaleX(0.87);">3.0</div>
<div style="position:absolute;top:90.15px;height:8.59px;line-height:8.59px;font-size:6.61px;color:#232f6e;white-space:nowrap;right:427.30px;transform-origin:100% 50%;transform:scaleX(0.87);">1.3</div>
<div style="position:absolute;top:90.15px;height:8.59px;line-height:8.59px;font-size:6.61px;color:#232f6e;white-space:nowrap;right:403.90px;transform-origin:100% 50%;transform:scaleX(0.87);">49.6</div>
<div style="position:absolute;top:90.15px;height:8.59px;line-height:8.59px;font-size:6.61px;color:#232f6e;white-space:nowrap;right:380.70px;transform-origin:100% 50%;transform:scaleX(0.87);">1.4</div>
<div style="position:absolute;top:90.15px;height:8.59px;line-height:8.59px;font-size:6.61px;color:#232f6e;white-space:nowrap;right:357.50px;transform-origin:100% 50%;transform:scaleX(0.87);">3.1</div>
<div style="position:absolute;top:90.15px;height:8.59px;line-height:8.59px;font-size:6.61px;color:#232f6e;white-space:nowrap;right:313.80px;transform-origin:100% 50%;transform:scaleX(0.87);">4.4</div>
<div style="position:absolute;left:27.30px;top:99.59px;width:8.6px;height:8.6px;border-radius:50%;background:#8fcf6e;"></div>
<div style="position:absolute;top:100.47px;height:8.83px;line-height:8.83px;font-size:6.79px;color:#1c3a5e;white-space:nowrap;font-weight:bold;left:-118.40px;width:300px;text-align:center;transform-origin:50% 50%;transform:scaleX(0.87);">3</div>
<div style="position:absolute;top:100.50px;height:8.59px;line-height:8.59px;font-size:6.61px;color:#232f6e;white-space:nowrap;right:900.40px;transform-origin:100% 50%;transform:scaleX(0.87);">361</div>
<div style="position:absolute;top:100.50px;height:8.59px;line-height:8.59px;font-size:6.61px;color:#232f6e;white-space:nowrap;left:105.20px;transform-origin:0 50%;transform:scaleX(0.8906);">80.50.18.73</div>
<div style="position:absolute;top:100.50px;height:8.59px;line-height:8.59px;font-size:6.61px;color:#232f6e;white-space:nowrap;left:307.90px;transform-origin:0 50%;transform:scaleX(0.9799);">wro-r1.tpnet.pl</div>
<div style="position:absolute;top:100.50px;height:8.59px;line-height:8.59px;font-size:6.61px;color:#232f6e;white-space:nowrap;right:450.70px;transform-origin:100% 50%;transform:scaleX(0.87);">2.5</div>
<div style="position:absolute;top:100.50px;height:8.59px;line-height:8.59px;font-size:6.61px;color:#232f6e;white-space:nowrap;right:427.30px;transform-origin:100% 50%;transform:scaleX(0.87);">1.2</div>
<div style="position:absolute;top:100.50px;height:8.59px;line-height:8.59px;font-size:6.61px;color:#232f6e;white-space:nowrap;right:403.90px;transform-origin:100% 50%;transform:scaleX(0.87);">97.8</div>
<div style="position:absolute;top:100.50px;height:8.59px;line-height:8.59px;font-size:6.61px;color:#232f6e;white-space:nowrap;right:380.70px;transform-origin:100% 50%;transform:scaleX(0.87);">1.4</div>
<div style="position:absolute;top:100.50px;height:8.59px;line-height:8.59px;font-size:6.61px;color:#232f6e;white-space:nowrap;right:357.50px;transform-origin:100% 50%;transform:scaleX(0.87);">2.2</div>
<div style="position:absolute;top:100.50px;height:8.59px;line-height:8.59px;font-size:6.61px;color:#232f6e;white-space:nowrap;right:313.80px;transform-origin:100% 50%;transform:scaleX(0.87);">4.4</div>
<div style="position:absolute;left:27.30px;top:109.94px;width:8.6px;height:8.6px;border-radius:50%;background:#8fcf6e;"></div>
<div style="position:absolute;top:110.82px;height:8.83px;line-height:8.83px;font-size:6.79px;color:#1c3a5e;white-space:nowrap;font-weight:bold;left:-118.40px;width:300px;text-align:center;transform-origin:50% 50%;transform:scaleX(0.87);">4</div>
<div style="position:absolute;top:110.84px;height:8.59px;line-height:8.59px;font-size:6.61px;color:#232f6e;white-space:nowrap;right:926.20px;transform-origin:100% 50%;transform:scaleX(0.87);">1</div>
<div style="position:absolute;top:110.84px;height:8.59px;line-height:8.59px;font-size:6.61px;color:#232f6e;white-space:nowrap;right:900.40px;transform-origin:100% 50%;transform:scaleX(0.87);">361</div>
<div style="position:absolute;top:110.84px;height:8.59px;line-height:8.59px;font-size:6.61px;color:#232f6e;white-space:nowrap;left:105.20px;transform-origin:0 50%;transform:scaleX(0.8967);">194.204.175.209</div>
<div style="position:absolute;top:110.84px;height:8.59px;line-height:8.59px;font-size:6.61px;color:#232f6e;white-space:nowrap;left:307.90px;transform-origin:0 50%;transform:scaleX(0.9797);">poz-r1.tpnet.pl</div>
<div style="position:absolute;top:110.84px;height:8.59px;line-height:8.59px;font-size:6.61px;color:#232f6e;white-space:nowrap;right:450.70px;transform-origin:100% 50%;transform:scaleX(0.87);">4.2</div>
<div style="position:absolute;top:110.84px;height:8.59px;line-height:8.59px;font-size:6.61px;color:#232f6e;white-space:nowrap;right:427.30px;transform-origin:100% 50%;transform:scaleX(0.87);">3.4</div>
<div style="position:absolute;top:110.84px;height:8.59px;line-height:8.59px;font-size:6.61px;color:#232f6e;white-space:nowrap;right:403.90px;transform-origin:100% 50%;transform:scaleX(0.87);">27.2</div>
<div style="position:absolute;top:110.84px;height:8.59px;line-height:8.59px;font-size:6.61px;color:#232f6e;white-space:nowrap;right:380.70px;transform-origin:100% 50%;transform:scaleX(0.87);">3.6</div>
<div style="position:absolute;top:110.84px;height:8.59px;line-height:8.59px;font-size:6.61px;color:#232f6e;white-space:nowrap;right:357.50px;transform-origin:100% 50%;transform:scaleX(0.87);">0.9</div>
<div style="position:absolute;top:110.84px;height:8.59px;line-height:8.59px;font-size:6.61px;color:#232f6e;white-space:nowrap;right:334.10px;transform-origin:100% 50%;transform:scaleX(0.87);">0.3</div>
<div style="position:absolute;top:110.84px;height:8.59px;line-height:8.59px;font-size:6.61px;color:#232f6e;white-space:nowrap;right:313.80px;transform-origin:100% 50%;transform:scaleX(0.87);">4.4</div>
<div style="position:absolute;left:27.30px;top:120.28px;width:8.6px;height:8.6px;border-radius:50%;background:#8fcf6e;"></div>
<div style="position:absolute;top:121.17px;height:8.83px;line-height:8.83px;font-size:6.79px;color:#1c3a5e;white-space:nowrap;font-weight:bold;left:-118.40px;width:300px;text-align:center;transform-origin:50% 50%;transform:scaleX(0.87);">5</div>
<div style="position:absolute;top:121.19px;height:8.59px;line-height:8.59px;font-size:6.61px;color:#232f6e;white-space:nowrap;right:900.40px;transform-origin:100% 50%;transform:scaleX(0.87);">361</div>
<div style="position:absolute;top:121.19px;height:8.59px;line-height:8.59px;font-size:6.61px;color:#232f6e;white-space:nowrap;left:105.20px;transform-origin:0 50%;transform:scaleX(0.8918);">193.251.249.5</div>
<div style="position:absolute;top:121.19px;height:8.59px;line-height:8.59px;font-size:6.61px;color:#232f6e;white-space:nowrap;left:307.90px;transform-origin:0 50%;transform:scaleX(0.9527);">ae16-10.ffttr7.frankfurt.opentransit.net</div>
<div style="position:absolute;top:121.19px;height:8.59px;line-height:8.59px;font-size:6.61px;color:#232f6e;white-space:nowrap;right:450.70px;transform-origin:100% 50%;transform:scaleX(0.87);">26.5</div>
<div style="position:absolute;top:121.19px;height:8.59px;line-height:8.59px;font-size:6.61px;color:#232f6e;white-space:nowrap;right:427.30px;transform-origin:100% 50%;transform:scaleX(0.87);">24.8</div>
<div style="position:absolute;top:121.19px;height:8.59px;line-height:8.59px;font-size:6.61px;color:#232f6e;white-space:nowrap;right:403.90px;transform-origin:100% 50%;transform:scaleX(0.87);">61.2</div>
<div style="position:absolute;top:121.19px;height:8.59px;line-height:8.59px;font-size:6.61px;color:#232f6e;white-space:nowrap;right:380.70px;transform-origin:100% 50%;transform:scaleX(0.87);">25.1</div>
<div style="position:absolute;top:121.19px;height:8.59px;line-height:8.59px;font-size:6.61px;color:#232f6e;white-space:nowrap;right:357.50px;transform-origin:100% 50%;transform:scaleX(0.87);">2.3</div>
<div style="position:absolute;top:121.19px;height:8.59px;line-height:8.59px;font-size:6.61px;color:#232f6e;white-space:nowrap;right:313.80px;transform-origin:100% 50%;transform:scaleX(0.87);">4.39</div>
<div style="position:absolute;left:27.30px;top:130.62px;width:8.6px;height:8.6px;border-radius:50%;background:#8fcf6e;"></div>
<div style="position:absolute;top:131.51px;height:8.83px;line-height:8.83px;font-size:6.79px;color:#1c3a5e;white-space:nowrap;font-weight:bold;left:-118.40px;width:300px;text-align:center;transform-origin:50% 50%;transform:scaleX(0.87);">6</div>
<div style="position:absolute;top:131.53px;height:8.59px;line-height:8.59px;font-size:6.61px;color:#232f6e;white-space:nowrap;right:926.20px;transform-origin:100% 50%;transform:scaleX(0.87);">11</div>
<div style="position:absolute;top:131.53px;height:8.59px;line-height:8.59px;font-size:6.61px;color:#232f6e;white-space:nowrap;right:900.40px;transform-origin:100% 50%;transform:scaleX(0.87);">361</div>
<div style="position:absolute;top:131.53px;height:8.59px;line-height:8.59px;font-size:6.61px;color:#232f6e;white-space:nowrap;left:105.20px;transform-origin:0 50%;transform:scaleX(0.8906);">4.68.73.109</div>
<div style="position:absolute;top:131.53px;height:8.59px;line-height:8.59px;font-size:6.61px;color:#232f6e;white-space:nowrap;left:307.90px;transform-origin:0 50%;transform:scaleX(0.9143);">lag-9.ear2.Frankfurt1.Level3.net</div>
<div style="position:absolute;top:131.53px;height:8.59px;line-height:8.59px;font-size:6.61px;color:#232f6e;white-space:nowrap;right:450.70px;transform-origin:100% 50%;transform:scaleX(0.87);">29.0</div>
<div style="position:absolute;top:131.53px;height:8.59px;line-height:8.59px;font-size:6.61px;color:#232f6e;white-space:nowrap;right:427.30px;transform-origin:100% 50%;transform:scaleX(0.87);">24.8</div>
<div style="position:absolute;top:131.53px;height:8.59px;line-height:8.59px;font-size:6.61px;color:#232f6e;white-space:nowrap;right:403.90px;transform-origin:100% 50%;transform:scaleX(0.87);">300.2</div>
<div style="position:absolute;top:131.53px;height:8.59px;line-height:8.59px;font-size:6.61px;color:#232f6e;white-space:nowrap;right:380.70px;transform-origin:100% 50%;transform:scaleX(0.87);">26.0</div>
<div style="position:absolute;top:131.53px;height:8.59px;line-height:8.59px;font-size:6.61px;color:#232f6e;white-space:nowrap;right:357.50px;transform-origin:100% 50%;transform:scaleX(0.87);">6.1</div>
<div style="position:absolute;top:131.53px;height:8.59px;line-height:8.59px;font-size:6.61px;color:#232f6e;white-space:nowrap;right:334.10px;transform-origin:100% 50%;transform:scaleX(0.87);">3.0</div>
<div style="position:absolute;top:131.53px;height:8.59px;line-height:8.59px;font-size:6.61px;color:#232f6e;white-space:nowrap;right:313.80px;transform-origin:100% 50%;transform:scaleX(0.87);">4.38</div>
<div style="position:absolute;left:27.30px;top:140.97px;width:8.6px;height:8.6px;border-radius:50%;background:#8fcf6e;"></div>
<div style="position:absolute;top:141.86px;height:8.83px;line-height:8.83px;font-size:6.79px;color:#1c3a5e;white-space:nowrap;font-weight:bold;left:-118.40px;width:300px;text-align:center;transform-origin:50% 50%;transform:scaleX(0.87);">7</div>
<div style="position:absolute;top:141.88px;height:8.59px;line-height:8.59px;font-size:6.61px;color:#232f6e;white-space:nowrap;right:926.20px;transform-origin:100% 50%;transform:scaleX(0.87);">16</div>
<div style="position:absolute;top:141.88px;height:8.59px;line-height:8.59px;font-size:6.61px;color:#232f6e;white-space:nowrap;right:900.40px;transform-origin:100% 50%;transform:scaleX(0.87);">361</div>
<div style="position:absolute;top:141.88px;height:8.59px;line-height:8.59px;font-size:6.61px;color:#232f6e;white-space:nowrap;left:105.20px;transform-origin:0 50%;transform:scaleX(0.8835);">4.69.162.142</div>
<div style="position:absolute;top:141.88px;height:8.59px;line-height:8.59px;font-size:6.61px;color:#232f6e;white-space:nowrap;left:307.90px;transform-origin:0 50%;transform:scaleX(0.925);">ae-118-3504.edge5.Amsterdam1.Level3.net</div>
<div style="position:absolute;top:141.88px;height:8.59px;line-height:8.59px;font-size:6.61px;color:#232f6e;white-space:nowrap;right:450.70px;transform-origin:100% 50%;transform:scaleX(0.87);">29.6</div>
<div style="position:absolute;top:141.88px;height:8.59px;line-height:8.59px;font-size:6.61px;color:#232f6e;white-space:nowrap;right:427.30px;transform-origin:100% 50%;transform:scaleX(0.87);">29.1</div>
<div style="position:absolute;top:141.88px;height:8.59px;line-height:8.59px;font-size:6.61px;color:#232f6e;white-space:nowrap;right:403.90px;transform-origin:100% 50%;transform:scaleX(0.87);">79.4</div>
<div style="position:absolute;top:141.88px;height:8.59px;line-height:8.59px;font-size:6.61px;color:#232f6e;white-space:nowrap;right:380.70px;transform-origin:100% 50%;transform:scaleX(0.87);">29.3</div>
<div style="position:absolute;top:141.88px;height:8.59px;line-height:8.59px;font-size:6.61px;color:#232f6e;white-space:nowrap;right:357.50px;transform-origin:100% 50%;transform:scaleX(0.87);">0.7</div>
<div style="position:absolute;top:141.88px;height:8.59px;line-height:8.59px;font-size:6.61px;color:#232f6e;white-space:nowrap;right:334.10px;transform-origin:100% 50%;transform:scaleX(0.87);">4.4</div>
<div style="position:absolute;top:141.88px;height:8.59px;line-height:8.59px;font-size:6.61px;color:#232f6e;white-space:nowrap;right:313.80px;transform-origin:100% 50%;transform:scaleX(0.87);">4.39</div>
<div style="position:absolute;left:27.30px;top:151.31px;width:8.6px;height:8.6px;border-radius:50%;background:#8fcf6e;"></div>
<div style="position:absolute;top:152.20px;height:8.83px;line-height:8.83px;font-size:6.79px;color:#1c3a5e;white-space:nowrap;font-weight:bold;left:-118.40px;width:300px;text-align:center;transform-origin:50% 50%;transform:scaleX(0.87);">8</div>
<div style="position:absolute;top:152.22px;height:8.59px;line-height:8.59px;font-size:6.61px;color:#232f6e;white-space:nowrap;right:926.20px;transform-origin:100% 50%;transform:scaleX(0.87);">27</div>
<div style="position:absolute;top:152.22px;height:8.59px;line-height:8.59px;font-size:6.61px;color:#232f6e;white-space:nowrap;right:900.40px;transform-origin:100% 50%;transform:scaleX(0.87);">360</div>
<div style="position:absolute;top:152.22px;height:8.59px;line-height:8.59px;font-size:6.61px;color:#232f6e;white-space:nowrap;left:105.20px;transform-origin:0 50%;transform:scaleX(0.8835);">212.72.41.70</div>
<div style="position:absolute;top:152.22px;height:8.59px;line-height:8.59px;font-size:6.61px;color:#232f6e;white-space:nowrap;left:307.90px;transform-origin:0 50%;transform:scaleX(0.8888);">INTERACTIVE.edge5.Amsterdam1.Level3.net</div>
<div style="position:absolute;top:152.22px;height:8.59px;line-height:8.59px;font-size:6.61px;color:#232f6e;white-space:nowrap;right:450.70px;transform-origin:100% 50%;transform:scaleX(0.87);">34.7</div>
<div style="position:absolute;top:152.22px;height:8.59px;line-height:8.59px;font-size:6.61px;color:#232f6e;white-space:nowrap;right:427.30px;transform-origin:100% 50%;transform:scaleX(0.87);">34.3</div>
<div style="position:absolute;top:152.22px;height:8.59px;line-height:8.59px;font-size:6.61px;color:#232f6e;white-space:nowrap;right:403.90px;transform-origin:100% 50%;transform:scaleX(0.87);">46.2</div>
<div style="position:absolute;top:152.22px;height:8.59px;line-height:8.59px;font-size:6.61px;color:#232f6e;white-space:nowrap;right:380.70px;transform-origin:100% 50%;transform:scaleX(0.87);">34.4</div>
<div style="position:absolute;top:152.22px;height:8.59px;line-height:8.59px;font-size:6.61px;color:#232f6e;white-space:nowrap;right:357.50px;transform-origin:100% 50%;transform:scaleX(0.87);">0.3</div>
<div style="position:absolute;top:152.22px;height:8.59px;line-height:8.59px;font-size:6.61px;color:#232f6e;white-space:nowrap;right:334.10px;transform-origin:100% 50%;transform:scaleX(0.87);">7.5</div>
<div style="position:absolute;top:152.22px;height:8.59px;line-height:8.59px;font-size:6.61px;color:#232f6e;white-space:nowrap;right:313.80px;transform-origin:100% 50%;transform:scaleX(0.87);">4.38</div>
<div style="position:absolute;left:27.30px;top:161.66px;width:8.6px;height:8.6px;border-radius:50%;background:#8fcf6e;"></div>
<div style="position:absolute;top:162.55px;height:8.83px;line-height:8.83px;font-size:6.79px;color:#1c3a5e;white-space:nowrap;font-weight:bold;left:-118.40px;width:300px;text-align:center;transform-origin:50% 50%;transform:scaleX(0.87);">9</div>
<div style="position:absolute;top:162.57px;height:8.59px;line-height:8.59px;font-size:6.61px;color:#232f6e;white-space:nowrap;right:926.20px;transform-origin:100% 50%;transform:scaleX(0.87);">20</div>
<div style="position:absolute;top:162.57px;height:8.59px;line-height:8.59px;font-size:6.61px;color:#232f6e;white-space:nowrap;right:900.40px;transform-origin:100% 50%;transform:scaleX(0.87);">361</div>
<div style="position:absolute;top:162.57px;height:8.59px;line-height:8.59px;font-size:6.61px;color:#232f6e;white-space:nowrap;left:105.20px;transform-origin:0 50%;transform:scaleX(0.8967);">109.200.218.165</div>
<div style="position:absolute;top:162.57px;height:8.59px;line-height:8.59px;font-size:6.61px;color:#232f6e;white-space:nowrap;left:307.90px;transform-origin:0 50%;transform:scaleX(0.9351);">100ge.br3-cr0.smartdc.rtm.i3d.net</div>
<div style="position:absolute;top:162.57px;height:8.59px;line-height:8.59px;font-size:6.61px;color:#232f6e;white-space:nowrap;right:450.70px;transform-origin:100% 50%;transform:scaleX(0.87);">31.4</div>
<div style="position:absolute;top:162.57px;height:8.59px;line-height:8.59px;font-size:6.61px;color:#232f6e;white-space:nowrap;right:427.30px;transform-origin:100% 50%;transform:scaleX(0.87);">30.0</div>
<div style="position:absolute;top:162.57px;height:8.59px;line-height:8.59px;font-size:6.61px;color:#232f6e;white-space:nowrap;right:403.90px;transform-origin:100% 50%;transform:scaleX(0.87);">43.2</div>
<div style="position:absolute;top:162.57px;height:8.59px;line-height:8.59px;font-size:6.61px;color:#232f6e;white-space:nowrap;right:380.70px;transform-origin:100% 50%;transform:scaleX(0.87);">36.6</div>
<div style="position:absolute;top:162.57px;height:8.59px;line-height:8.59px;font-size:6.61px;color:#232f6e;white-space:nowrap;right:357.50px;transform-origin:100% 50%;transform:scaleX(0.87);">0.8</div>
<div style="position:absolute;top:162.57px;height:8.59px;line-height:8.59px;font-size:6.61px;color:#232f6e;white-space:nowrap;right:334.10px;transform-origin:100% 50%;transform:scaleX(0.87);">5.5</div>
<div style="position:absolute;top:162.57px;height:8.59px;line-height:8.59px;font-size:6.61px;color:#232f6e;white-space:nowrap;right:313.80px;transform-origin:100% 50%;transform:scaleX(0.87);">4.38</div>
<div style="position:absolute;left:27.30px;top:172.00px;width:8.6px;height:8.6px;border-radius:50%;background:#8fcf6e;"></div>
<div style="position:absolute;left:27.60px;top:172.00px;width:9.60px;height:8.60px;background:#8fcf6e;border-radius:4.3px;"></div>
<div style="position:absolute;top:172.89px;height:8.83px;line-height:8.83px;font-size:6.79px;color:#1c3a5e;white-space:nowrap;font-weight:bold;letter-spacing:-0.3px;left:-117.60px;width:300px;text-align:center;transform-origin:50% 50%;transform:scaleX(0.87);">10</div>
<div style="position:absolute;top:172.91px;height:8.59px;line-height:8.59px;font-size:6.61px;color:#232f6e;white-space:nowrap;right:926.20px;transform-origin:100% 50%;transform:scaleX(0.87);">27</div>
<div style="position:absolute;top:172.91px;height:8.59px;line-height:8.59px;font-size:6.61px;color:#232f6e;white-space:nowrap;right:900.40px;transform-origin:100% 50%;transform:scaleX(0.87);">361</div>
<div style="position:absolute;top:172.91px;height:8.59px;line-height:8.59px;font-size:6.61px;color:#232f6e;white-space:nowrap;left:105.20px;transform-origin:0 50%;transform:scaleX(0.8918);">31.204.146.12</div>
<div style="position:absolute;top:172.91px;height:8.59px;line-height:8.59px;font-size:6.61px;color:#232f6e;white-space:nowrap;left:307.90px;transform-origin:0 50%;transform:scaleX(0.8966);">31.204.146.12</div>
<div style="position:absolute;top:172.91px;height:8.59px;line-height:8.59px;font-size:6.61px;color:#232f6e;white-space:nowrap;right:450.70px;transform-origin:100% 50%;transform:scaleX(0.87);">34.4</div>
<div style="position:absolute;top:172.91px;height:8.59px;line-height:8.59px;font-size:6.61px;color:#232f6e;white-space:nowrap;right:427.30px;transform-origin:100% 50%;transform:scaleX(0.87);">34.3</div>
<div style="position:absolute;top:172.91px;height:8.59px;line-height:8.59px;font-size:6.61px;color:#232f6e;white-space:nowrap;right:403.90px;transform-origin:100% 50%;transform:scaleX(0.87);">39.2</div>
<div style="position:absolute;top:172.91px;height:8.59px;line-height:8.59px;font-size:6.61px;color:#232f6e;white-space:nowrap;right:380.70px;transform-origin:100% 50%;transform:scaleX(0.87);">34.4</div>
<div style="position:absolute;top:172.91px;height:8.59px;line-height:8.59px;font-size:6.61px;color:#232f6e;white-space:nowrap;right:357.50px;transform-origin:100% 50%;transform:scaleX(0.87);">0.1</div>
<div style="position:absolute;top:172.91px;height:8.59px;line-height:8.59px;font-size:6.61px;color:#232f6e;white-space:nowrap;right:334.10px;transform-origin:100% 50%;transform:scaleX(0.87);">7.5</div>
<div style="position:absolute;top:172.91px;height:8.59px;line-height:8.59px;font-size:6.61px;color:#232f6e;white-space:nowrap;right:313.80px;transform-origin:100% 50%;transform:scaleX(0.87);">4.38</div>
<svg width="100" height="200" viewBox="0 0 100 200"><g fill="#6e6e6e"><rect x="42.2" y="176.5" width="1.1" height="2.4"/><rect x="44" y="174.1" width="1.2" height="4.8"/><rect x="45.8" y="175" width="1.1" height="3.9"/><rect x="47.3" y="176.1" width="1" height="2.8"/></g></svg>
<div style="position:absolute;left:689.00px;top:67.50px;width:70.10px;height:114.00px;background:#dff0d5;"></div>
<div style="position:absolute;left:759.10px;top:67.50px;width:70.10px;height:114.00px;background:#feecd0;"></div>
<div style="position:absolute;left:829.20px;top:67.50px;width:70.50px;height:114.00px;background:#fed3cd;"></div>
<div style="position:absolute;left:899.70px;top:66.80px;width:13.30px;height:207.70px;background:#f0f0f0;"></div>
<div style="position:absolute;left:24.20px;top:181.50px;width:875.50px;height:92.60px;background:#d2d2d2;"></div>
<div style="position:absolute;left:24.20px;top:181.00px;width:875.50px;height:1.80px;background:#7e7e7e;"></div>
<div style="position:absolute;top:182.61px;height:8.59px;line-height:8.59px;font-size:6.61px;color:#232f6e;white-space:nowrap;right:926.20px;transform-origin:100% 50%;transform:scaleX(0.87);">27</div>
<div style="position:absolute;top:182.61px;height:8.59px;line-height:8.59px;font-size:6.61px;color:#232f6e;white-space:nowrap;right:900.40px;transform-origin:100% 50%;transform:scaleX(0.87);">361</div>
<div style="position:absolute;top:182.61px;height:8.59px;line-height:8.59px;font-size:6.61px;color:#232f6e;white-space:nowrap;font-weight:bold;right:473.70px;transform-origin:100% 50%;transform:scaleX(0.87);">Round Trip (ms)</div>
<div style="position:absolute;top:182.61px;height:8.59px;line-height:8.59px;font-size:6.61px;color:#232f6e;white-space:nowrap;right:450.70px;transform-origin:100% 50%;transform:scaleX(0.87);">34.4</div>
<div style="position:absolute;top:182.61px;height:8.59px;line-height:8.59px;font-size:6.61px;color:#232f6e;white-space:nowrap;right:427.30px;transform-origin:100% 50%;transform:scaleX(0.87);">34.3</div>
<div style="position:absolute;top:182.61px;height:8.59px;line-height:8.59px;font-size:6.61px;color:#232f6e;white-space:nowrap;right:403.90px;transform-origin:100% 50%;transform:scaleX(0.87);">39.2</div>
<div style="position:absolute;top:182.61px;height:8.59px;line-height:8.59px;font-size:6.61px;color:#232f6e;white-space:nowrap;right:380.70px;transform-origin:100% 50%;transform:scaleX(0.87);">34.4</div>
<div style="position:absolute;top:182.61px;height:8.59px;line-height:8.59px;font-size:6.61px;color:#232f6e;white-space:nowrap;right:357.50px;transform-origin:100% 50%;transform:scaleX(0.87);">0.1</div>
<div style="position:absolute;top:182.61px;height:8.59px;line-height:8.59px;font-size:6.61px;color:#232f6e;white-space:nowrap;right:334.10px;transform-origin:100% 50%;transform:scaleX(0.87);">7.5</div>
<div style="position:absolute;top:182.61px;height:8.59px;line-height:8.59px;font-size:6.61px;color:#232f6e;white-space:nowrap;right:313.80px;transform-origin:100% 50%;transform:scaleX(0.87);">4.38</div>
<div style="position:absolute;top:182.61px;height:8.59px;line-height:8.59px;font-size:6.61px;color:#232f6e;white-space:nowrap;right:103.20px;transform-origin:100% 50%;transform:scaleX(0.8893);">Focus: 10:12:00a - 10:17:59a</div>
<svg width="999" height="200" viewBox="0 0 999 200"><path d="M702.1 67.0 L881.1 67.0 L873.5 78.0 L709.1 78.0 Z" fill="#f1f1f1"/><rect x="689.0" y="79.80" width="1.70" height="6.8" fill="#ffb5c0" stroke="#f59aa8" stroke-width="0.5"/><rect x="689.0" y="110.84" width="1.70" height="6.8" fill="#ffb5c0" stroke="#f59aa8" stroke-width="0.5"/><rect x="689.0" y="131.53" width="20.60" height="6.8" fill="#ffb5c0" stroke="#f59aa8" stroke-width="0.5"/><rect x="689.0" y="141.87" width="30.40" height="6.8" fill="#ffb5c0" stroke="#f59aa8" stroke-width="0.5"/><rect x="689.0" y="152.22" width="52.10" height="6.8" fill="#ffb5c0" stroke="#f59aa8" stroke-width="0.5"/><rect x="689.0" y="162.56" width="38.10" height="6.8" fill="#ffb5c0" stroke="#f59aa8" stroke-width="0.5"/><rect x="689.0" y="172.91" width="52.10" height="6.8" fill="#ffb5c0" stroke="#f59aa8" stroke-width="0.5"/><path d="M689.14 83.20 L689.70 83.20 M689.70 81.80 L689.70 84.60" stroke="#8a8a8a" stroke-width="0.6" fill="none"/><path d="M689.91 93.55 L723.72 93.55 M723.72 92.14 L723.72 94.95" stroke="#8a8a8a" stroke-width="0.6" fill="none"/><path d="M689.84 103.89 L757.46 103.89 M757.46 102.49 L757.46 105.29" stroke="#8a8a8a" stroke-width="0.6" fill="none"/><path d="M691.38 114.24 L708.04 114.24 M708.04 112.84 L708.04 115.64" stroke="#8a8a8a" stroke-width="0.6" fill="none"/><path d="M706.36 124.58 L731.84 124.58 M731.84 123.18 L731.84 125.98" stroke="#8a8a8a" stroke-width="0.6" fill="none"/><path d="M706.36 134.93 L898.80 134.93 M898.80 133.53 L898.80 136.33" stroke="#8a8a8a" stroke-width="0.6" fill="none"/><path d="M709.37 145.27 L744.58 145.27 M744.58 143.87 L744.58 146.67" stroke="#8a8a8a" stroke-width="0.6" fill="none"/><path d="M713.01 155.62 L721.34 155.62 M721.34 154.22 L721.34 157.02" stroke="#8a8a8a" stroke-width="0.6" fill="none"/><path d="M710.00 165.96 L719.24 165.96 M719.24 164.56 L719.24 167.36" stroke="#8a8a8a" stroke-width="0.6" fill="none"/><path d="M713.01 176.31 L716.44 176.31 M716.44 174.91 L716.44 177.71" stroke="#8a8a8a" stroke-width="0.6" fill="none"/><polyline points="689.21,83.20 691.10,93.55 690.75,103.89 691.94,114.24 707.55,124.58 709.30,134.93 709.72,145.27 713.29,155.62 710.98,165.96 713.08,176.31" fill="none" stroke="#f4544b" stroke-width="1.0"/><circle cx="689.21" cy="83.20" r="1.8" fill="none" stroke="#e8382f" stroke-width="0.6"/><path d="M687.91 81.90 L690.51 84.50 M690.51 81.90 L687.91 84.50" stroke="#1c22d8" stroke-width="0.8"/><circle cx="691.10" cy="93.55" r="1.8" fill="none" stroke="#e8382f" stroke-width="0.6"/><path d="M688.68 92.25 L691.28 94.84 M691.28 92.25 L688.68 94.84" stroke="#1c22d8" stroke-width="0.8"/><circle cx="690.75" cy="103.89" r="1.8" fill="none" stroke="#e8382f" stroke-width="0.6"/><path d="M688.68 102.59 L691.28 105.19 M691.28 102.59 L688.68 105.19" stroke="#1c22d8" stroke-width="0.8"/><circle cx="691.94" cy="114.24" r="1.8" fill="none" stroke="#e8382f" stroke-width="0.6"/><path d="M690.22 112.94 L692.82 115.54 M692.82 112.94 L690.22 115.54" stroke="#1c22d8" stroke-width="0.8"/><circle cx="707.55" cy="124.58" r="1.8" fill="none" stroke="#e8382f" stroke-width="0.6"/><path d="M705.27 123.28 L707.87 125.88 M707.87 123.28 L705.27 125.88" stroke="#1c22d8" stroke-width="0.8"/><circle cx="709.30" cy="134.93" r="1.8" fill="none" stroke="#e8382f" stroke-width="0.6"/><path d="M705.90 133.62 L708.50 136.23 M708.50 133.62 L705.90 136.23" stroke="#1c22d8" stroke-width="0.8"/><circle cx="709.72" cy="145.27" r="1.8" fill="none" stroke="#e8382f" stroke-width="0.6"/><path d="M708.21 143.97 L710.81 146.57 M710.81 143.97 L708.21 146.57" stroke="#1c22d8" stroke-width="0.8"/><circle cx="713.29" cy="155.62" r="1.8" fill="none" stroke="#e8382f" stroke-width="0.6"/><path d="M711.78 154.31 L714.38 156.92 M714.38 154.31 L711.78 156.92" stroke="#1c22d8" stroke-width="0.8"/><circle cx="710.98" cy="165.96" r="1.8" fill="none" stroke="#e8382f" stroke-width="0.6"/><path d="M713.32 164.66 L715.92 167.26 M715.92 164.66 L713.32 167.26" stroke="#1c22d8" stroke-width="0.8"/><circle cx="713.08" cy="176.31" r="1.8" fill="none" stroke="#e8382f" stroke-width="0.6"/><path d="M711.78 175.00 L714.38 177.61 M714.38 175.00 L711.78 177.61" stroke="#1c22d8" stroke-width="0.8"/></svg>
<div style="position:absolute;top:69.64px;height:7.32px;line-height:7.32px;font-size:5.63px;color:#222;white-space:nowrap;left:690.30px;transform-origin:0 50%;transform:scaleX(0.87);">0 ms</div>
<div style="position:absolute;top:69.64px;height:7.32px;line-height:7.32px;font-size:5.63px;color:#222;white-space:nowrap;right:101.20px;transform-origin:100% 50%;transform:scaleX(0.87);">300 ms</div>
<div style="position:absolute;top:68.08px;height:8.83px;line-height:8.83px;font-size:6.79px;color:#222;white-space:nowrap;left:643.60px;width:300px;text-align:center;transform-origin:50% 50%;transform:scaleX(0.87);">Latency</div>
<div style="position:absolute;left:24.20px;top:273.90px;width:875.50px;height:2.00px;background:#52568a;"></div>
<div style="position:absolute;left:24.20px;top:275.60px;width:888.80px;height:206.20px;background:#f4f4f4;"></div>
<div style="position:absolute;top:275.51px;height:8.37px;line-height:8.37px;font-size:6.44px;color:#333;white-space:nowrap;left:40.20px;transform-origin:0 50%;transform:scaleX(0.8489);">31.204.146.12 hop 10</div>
<div style="position:absolute;top:275.51px;height:8.37px;line-height:8.37px;font-size:6.44px;color:#333;white-space:nowrap;left:311.50px;width:300px;text-align:center;transform-origin:50% 50%;transform:scaleX(0.87);">Default Settings</div>
<div style="position:absolute;top:275.51px;height:8.37px;line-height:8.37px;font-size:6.44px;color:#333;white-space:nowrap;right:114.00px;transform-origin:100% 50%;transform:scaleX(0.8608);">10 minutes (10:07:59a - 10:17:59a)</div>
<div style="position:absolute;left:40.00px;top:283.10px;width:844.20px;height:15.30px;background:#ffffff;border:0.8px solid #a4a4a4;border-right:none;border-bottom:none;border-left-color:#777;"></div>
<div style="position:absolute;left:40.60px;top:295.20px;width:843.60px;height:1.10px;background:#b6b6b6;"></div>
<div style="position:absolute;top:283.54px;height:6.72px;line-height:6.72px;font-size:5.17px;color:#8b1a1a;white-space:nowrap;left:312.00px;width:300px;text-align:center;transform-origin:50% 50%;transform:scaleX(0.9488);">Jitter (ms)</div>
<div style="position:absolute;top:284.91px;height:8.37px;line-height:8.37px;font-size:6.44px;color:#8b1a1a;white-space:nowrap;font-weight:bold;right:960.80px;transform-origin:100% 50%;transform:scaleX(0.87);">35</div>
<div style="position:absolute;left:40.30px;top:298.50px;width:843.70px;height:172.90px;background:#dff0d5;"></div>
<div style="position:absolute;top:296.11px;height:8.37px;line-height:8.37px;font-size:6.44px;color:#222;white-space:nowrap;right:960.80px;transform-origin:100% 50%;transform:scaleX(0.87);">50</div>
<div style="position:absolute;top:463.91px;height:8.37px;line-height:8.37px;font-size:6.44px;color:#222;white-space:nowrap;right:960.80px;transform-origin:100% 50%;transform:scaleX(0.87);">0</div>
<div style="position:absolute;top:297.04px;height:8.52px;line-height:8.52px;font-size:6.55px;color:#c0272d;white-space:nowrap;left:884.90px;transform-origin:0 50%;transform:scaleX(0.87);">30</div>
<div style="position:absolute;top:380.96px;height:8.07px;line-height:8.07px;font-size:6.21px;color:#333;white-space:nowrap;left:-114.30px;width:300px;text-align:center;transform-origin:50% 50%;transform:rotate(-90deg) scaleX(0.8637);">Latency (ms)</div>
<div style="position:absolute;top:385.56px;height:8.07px;line-height:8.07px;font-size:6.21px;color:#c0272d;white-space:nowrap;left:737.40px;width:300px;text-align:center;transform-origin:50% 50%;transform:rotate(90deg) scaleX(0.87);">Packet Loss %</div>
<div style="position:absolute;top:452.97px;height:8.07px;line-height:8.07px;font-size:6.21px;color:#b0bdab;white-space:nowrap;left:39.50px;transform-origin:0 50%;transform:scaleX(0.8917);">5 ms</div>
<div style="position:absolute;top:435.68px;height:8.07px;line-height:8.07px;font-size:6.21px;color:#b0bdab;white-space:nowrap;left:39.50px;transform-origin:0 50%;transform:scaleX(0.8988);">10 ms</div>
<div style="position:absolute;top:418.39px;height:8.07px;line-height:8.07px;font-size:6.21px;color:#b0bdab;white-space:nowrap;left:39.50px;transform-origin:0 50%;transform:scaleX(0.8988);">15 ms</div>
<div style="position:absolute;top:401.10px;height:8.07px;line-height:8.07px;font-size:6.21px;color:#b0bdab;white-space:nowrap;left:39.50px;transform-origin:0 50%;transform:scaleX(0.8988);">20 ms</div>
<div style="position:absolute;top:383.81px;height:8.07px;line-height:8.07px;font-size:6.21px;color:#b0bdab;white-space:nowrap;left:39.50px;transform-origin:0 50%;transform:scaleX(0.8988);">25 ms</div>
<div style="position:absolute;top:366.52px;height:8.07px;line-height:8.07px;font-size:6.21px;color:#b0bdab;white-space:nowrap;left:39.50px;transform-origin:0 50%;transform:scaleX(0.8988);">30 ms</div>
<div style="position:absolute;top:349.23px;height:8.07px;line-height:8.07px;font-size:6.21px;color:#b0bdab;white-space:nowrap;left:39.50px;transform-origin:0 50%;transform:scaleX(0.8988);">35 ms</div>
<div style="position:absolute;top:331.94px;height:8.07px;line-height:8.07px;font-size:6.21px;color:#b0bdab;white-space:nowrap;left:39.50px;transform-origin:0 50%;transform:scaleX(0.8988);">40 ms</div>
<div style="position:absolute;top:314.65px;height:8.07px;line-height:8.07px;font-size:6.21px;color:#b0bdab;white-space:nowrap;left:39.50px;transform-origin:0 50%;transform:scaleX(0.8988);">45 ms</div>
<div style="position:absolute;left:38.80px;top:301.50px;width:1.20px;height:164.90px;background:#f4f4f4;"></div>
<svg width="999" height="556" viewBox="0 0 999 556"><path d="M40.2 289.2 L884 289.2" stroke="#858585" stroke-width="1.2" stroke-dasharray="2.1 2.56" fill="none"/><path d="M40.3 454.11 L884.0 454.11" stroke="#cfdcc8" stroke-width="0.5"/><path d="M40.3 436.82 L884.0 436.82" stroke="#cfdcc8" stroke-width="0.5"/><path d="M40.3 419.53 L884.0 419.53" stroke="#cfdcc8" stroke-width="0.5"/><path d="M40.3 402.24 L884.0 402.24" stroke="#cfdcc8" stroke-width="0.5"/><path d="M40.3 384.95 L884.0 384.95" stroke="#cfdcc8" stroke-width="0.5"/><path d="M40.3 367.66 L884.0 367.66" stroke="#cfdcc8" stroke-width="0.5"/><path d="M40.3 350.37 L884.0 350.37" stroke="#cfdcc8" stroke-width="0.5"/><path d="M40.3 333.08 L884.0 333.08" stroke="#cfdcc8" stroke-width="0.5"/><path d="M40.3 315.79 L884.0 315.79" stroke="#cfdcc8" stroke-width="0.5"/><path d="M40.3 298.5 L40.3 471.7 L884.0 471.7" stroke="#777" stroke-width="0.7" fill="none"/><path d="M378.3 350.8 L379.5 352.0 L380.9 352.0 L382.3 352.0 L383.7 352.0 L385.1 351.5 L386.5 352.0 L387.9 352.0 L389.3 351.5 L390.7 352.0 L392.1 351.5 L393.5 352.0 L394.9 351.5 L396.3 351.5 L397.7 352.0 L399.1 352.0 L400.5 352.0 L401.9 352.0 L403.3 352.0 L404.7 352.0 L406.1 352.0 L407.5 352.0 L408.9 352.0 L410.3 351.5 L411.7 352.0 L413.1 352.0 L414.5 352.0 L415.9 352.0 L417.3 352.0 L418.7 352.0 L420.1 352.0 L421.5 352.0 L422.9 352.0 L424.3 352.0 L425.7 352.0 L427.1 351.5 L428.5 351.5 L429.9 352.0 L431.3 352.0 L432.7 352.0 L434.1 352.0 L435.5 352.0 L436.9 352.0 L438.3 352.0 L439.7 352.0 L441.1 352.0 L442.5 352.0 L443.9 352.0 L445.3 352.0 L445.3 344.2 L446.2 344.2 L446.2 352.0 L446.7 352.0 L448.1 352.0 L449.5 352.0 L449.5 335.5 L449.5 352.0 L450.9 352.0 L452.3 352.0 L453.7 352.0 L455.1 352.0 L456.5 352.0 L457.9 352.0 L459.3 351.5 L460.7 352.0 L462.1 352.0 L463.5 352.0 L464.9 352.0 L466.3 352.0 L467.7 352.0 L469.1 352.0 L470.5 352.0 L471.9 352.0 L473.3 352.0 L474.7 352.0 L476.1 352.0 L477.5 352.0 L478.9 351.5 L480.3 352.0 L481.7 352.0 L483.1 352.0 L484.5 352.0 L485.9 352.0 L487.3 352.0 L488.7 352.0 L490.1 350.8 L491.5 352.0 L492.9 352.0 L494.3 352.0 L495.7 351.5 L497.1 352.0 L498.5 352.0 L499.9 352.0 L501.3 352.0 L502.7 352.0 L504.1 351.5 L505.5 352.0 L506.9 352.0 L508.3 352.0 L509.7 352.0 L511.1 352.0 L512.5 352.0 L513.9 352.0 L515.3 352.0 L516.7 352.0 L518.1 352.0 L519.5 352.0 L520.9 352.0 L522.3 352.0 L523.7 352.0 L525.1 352.0 L526.5 352.0 L527.9 352.0 L529.3 350.8 L530.7 352.0 L532.1 352.0 L533.5 352.0 L534.9 352.0 L536.3 352.0 L537.7 352.0 L539.1 352.0 L540.5 352.0 L541.9 351.5 L543.3 352.0 L544.7 352.0 L546.1 352.0 L547.5 352.0 L548.9 352.0 L550.3 352.0 L551.7 351.5 L553.1 352.0 L554.5 351.5 L555.9 351.5 L557.3 352.0 L558.7 352.0 L560.1 352.0 L561.5 351.5 L562.9 350.8 L564.3 352.0 L565.7 351.5 L567.1 352.0 L568.5 350.8 L569.9 352.0 L571.3 352.0 L572.7 352.0 L574.1 352.0 L575.5 352.0 L576.9 352.0 L578.3 352.0 L579.7 352.0 L581.1 352.0 L582.5 352.0 L583.9 352.0 L585.3 351.5 L586.7 351.5 L588.1 352.0 L589.5 352.0 L590.9 352.0 L592.3 352.0 L593.7 350.8 L595.1 352.0 L596.5 352.0 L597.9 352.0 L599.3 352.0 L600.7 350.8 L602.1 352.0 L603.5 352.0 L604.9 352.0 L606.3 352.0 L607.7 352.0 L609.1 352.0 L610.5 352.0 L611.9 352.0 L613.3 352.0 L614.7 352.0 L616.1 352.0 L617.5 352.0 L618.9 352.0 L620.3 352.0 L621.7 352.0 L623.1 352.0 L624.5 352.0 L625.9 352.0 L627.3 352.0 L628.7 352.0 L630.1 352.0 L631.5 350.8 L632.9 350.8 L634.3 352.0 L635.7 352.0 L637.1 352.0 L638.5 352.0 L639.9 352.0 L641.3 352.0 L642.7 352.0 L644.1 352.0 L645.5 352.0 L646.9 352.0 L648.3 352.0 L649.7 352.0 L651.1 352.0 L652.5 352.0 L653.9 352.0 L655.3 352.0 L656.7 352.0 L658.1 352.0 L659.5 352.0 L660.9 351.5 L662.3 352.0 L663.7 352.0 L665.1 352.0 L666.5 352.0 L667.9 352.0 L669.3 352.0 L670.7 352.0 L672.1 352.0 L673.5 352.0 L674.9 352.0 L676.3 352.0 L677.7 352.0 L679.1 352.0 L680.5 352.0 L681.9 352.0 L683.3 352.0 L684.7 352.0 L686.1 352.0 L687.5 352.0 L688.9 352.0 L690.3 352.0 L691.7 352.0 L693.1 352.0 L694.5 352.0 L695.9 352.0 L697.3 352.0 L698.7 350.8 L700.1 352.0 L701.5 352.0 L702.9 352.0 L704.3 352.0 L705.7 352.0 L707.1 352.0 L708.5 352.0 L709.9 352.0 L711.3 352.0 L712.7 352.0 L714.1 352.0 L715.5 352.0 L716.9 352.0 L718.3 352.0 L719.7 352.0 L721.1 352.0 L722.5 352.0 L723.9 352.0 L725.3 352.0 L726.7 352.0 L728.1 352.0 L729.5 352.0 L730.9 352.0 L732.3 352.0 L733.7 352.0 L735.1 350.8 L736.5 352.0 L737.9 352.0 L739.3 350.8 L740.7 352.0 L742.1 352.0 L743.5 352.0 L744.9 352.0 L746.3 352.0 L747.7 352.0 L749.1 352.0 L750.5 352.0 L751.9 352.0 L753.3 351.5 L754.7 352.0 L756.1 352.0 L757.5 352.0 L758.9 352.0 L760.3 352.0 L761.7 352.0 L763.1 352.0 L764.5 352.0 L765.9 352.0 L767.3 352.0 L768.7 352.0 L770.1 352.0 L771.5 352.0 L772.9 352.0 L774.3 352.0 L775.7 352.0 L777.1 352.0 L778.5 352.0 L779.9 352.0 L781.3 352.0 L782.7 352.0 L784.1 352.0 L785.5 352.0 L786.9 352.0 L788.3 352.0 L789.7 352.0 L791.1 352.0 L792.5 351.5 L793.9 352.0 L795.3 351.5 L796.7 352.0 L798.1 352.0 L799.5 352.0 L800.9 352.0 L802.3 352.0 L803.7 352.0 L805.1 352.0 L806.5 352.0 L807.9 352.0 L809.3 352.0 L810.7 352.0 L812.1 352.0 L813.5 352.0 L814.9 352.0 L816.3 352.0 L817.7 352.0 L819.1 352.0 L820.5 352.0 L821.9 352.0 L823.3 352.0 L824.7 352.0 L826.1 352.0 L827.5 350.8 L828.9 352.0 L830.3 352.0 L831.7 350.8 L833.1 352.0 L834.5 352.0 L835.9 352.0 L837.3 351.5 L838.7 352.0 L840.1 352.0 L841.5 352.0 L842.9 351.5 L844.3 352.0 L845.7 351.5 L847.1 352.0 L848.5 352.0 L849.9 352.0 L851.3 352.0 L852.7 352.0 L854.1 352.0 L855.5 352.0 L856.9 352.0 L858.3 352.0 L859.7 352.0 L861.1 352.0 L862.5 351.5 L863.9 351.5 L865.3 352.0 L866.7 352.0 L868.1 351.5 L869.5 352.0 L870.9 352.0 L872.3 352.0 L873.7 351.5 L875.1 352.0 L876.5 351.5 L877.9 352.0 L879.3 352.0 L880.7 352.0 L882.1 352.0 L883.5 352.0" stroke="#151515" stroke-width="1.0" fill="none"/><rect x="398.05" y="298.5" width="1.7" height="172.90" fill="#fb0505"/><rect x="440.05" y="298.5" width="1.7" height="172.90" fill="#fb0505"/><rect x="466.85" y="298.5" width="1.7" height="172.90" fill="#fb0505"/><rect x="494.65" y="298.5" width="1.7" height="172.90" fill="#fb0505"/><rect x="551.05" y="298.5" width="1.7" height="172.90" fill="#fb0505"/><rect x="577.80" y="298.5" width="1.4" height="172.90" fill="#fb0505"/><rect x="591.95" y="298.5" width="1.7" height="172.90" fill="#fb0505"/><rect x="603.45" y="298.5" width="1.1" height="172.90" fill="#fb0505"/><rect x="620.05" y="298.5" width="1.7" height="172.90" fill="#fb0505"/><rect x="633.10" y="298.5" width="1.2" height="172.90" fill="#fb0505"/><rect x="648.15" y="298.5" width="1.7" height="172.90" fill="#fb0505"/><rect x="660.95" y="298.5" width="1.7" height="172.90" fill="#fb0505"/><rect x="674.75" y="298.5" width="1.7" height="172.90" fill="#fb0505"/><rect x="688.75" y="298.5" width="1.7" height="172.90" fill="#fb0505"/><rect x="698.65" y="298.5" width="1.7" height="172.90" fill="#fb0505"/><rect x="743.75" y="298.5" width="1.7" height="172.90" fill="#fb0505"/><rect x="763.25" y="298.5" width="1.7" height="172.90" fill="#fb0505"/><rect x="772.10" y="298.5" width="1.2" height="172.90" fill="#fb0505"/><rect x="785.75" y="298.5" width="1.7" height="172.90" fill="#fb0505"/><rect x="791.60" y="298.5" width="1.2" height="172.90" fill="#fb0505"/><rect x="799.80" y="298.5" width="3.0" height="172.90" fill="#fb0505"/><rect x="813.90" y="298.5" width="1.8" height="172.90" fill="#fb0505"/><rect x="828.00" y="298.5" width="1.8" height="172.90" fill="#fb0505"/><rect x="842.25" y="298.5" width="2.9" height="172.90" fill="#fb0505"/><rect x="868.70" y="298.5" width="1.8" height="172.90" fill="#fb0505"/><path d="M82.49 471.4 L82.49 473.0" stroke="#666" stroke-width="0.6"/><path d="M124.68 471.4 L124.68 473.0" stroke="#666" stroke-width="0.6"/><path d="M166.87 471.4 L166.87 473.0" stroke="#666" stroke-width="0.6"/><path d="M209.06 471.4 L209.06 473.0" stroke="#666" stroke-width="0.6"/><path d="M251.25 471.4 L251.25 473.0" stroke="#666" stroke-width="0.6"/><path d="M293.44 471.4 L293.44 473.0" stroke="#666" stroke-width="0.6"/><path d="M335.63 471.4 L335.63 473.0" stroke="#666" stroke-width="0.6"/><path d="M377.82 471.4 L377.82 473.0" stroke="#666" stroke-width="0.6"/><path d="M420.01 471.4 L420.01 473.0" stroke="#666" stroke-width="0.6"/><path d="M462.20 471.4 L462.20 473.0" stroke="#666" stroke-width="0.6"/><path d="M504.39 471.4 L504.39 473.0" stroke="#666" stroke-width="0.6"/><path d="M546.58 471.4 L546.58 473.0" stroke="#666" stroke-width="0.6"/><path d="M588.77 471.4 L588.77 473.0" stroke="#666" stroke-width="0.6"/><path d="M630.96 471.4 L630.96 473.0" stroke="#666" stroke-width="0.6"/><path d="M673.15 471.4 L673.15 473.0" stroke="#666" stroke-width="0.6"/><path d="M715.34 471.4 L715.34 473.0" stroke="#666" stroke-width="0.6"/><path d="M757.53 471.4 L757.53 473.0" stroke="#666" stroke-width="0.6"/><path d="M799.72 471.4 L799.72 473.0" stroke="#666" stroke-width="0.6"/><path d="M841.91 471.4 L841.91 473.0" stroke="#666" stroke-width="0.6"/></svg>
<div style="position:absolute;top:471.26px;height:8.07px;line-height:8.07px;font-size:6.21px;color:#333;white-space:nowrap;left:40.00px;transform-origin:0 50%;transform:scaleX(0.87);">:08a</div>
<div style="position:absolute;top:471.26px;height:8.07px;line-height:8.07px;font-size:6.21px;color:#333;white-space:nowrap;left:75.89px;transform-origin:0 50%;transform:scaleX(0.87);">10:08:30a</div>
<div style="position:absolute;top:471.26px;height:8.07px;line-height:8.07px;font-size:6.21px;color:#333;white-space:nowrap;left:118.08px;transform-origin:0 50%;transform:scaleX(0.87);">10:09a</div>
<div style="position:absolute;top:471.26px;height:8.07px;line-height:8.07px;font-size:6.21px;color:#333;white-space:nowrap;left:160.27px;transform-origin:0 50%;transform:scaleX(0.87);">10:09:30a</div>
<div style="position:absolute;top:471.26px;height:8.07px;line-height:8.07px;font-size:6.21px;color:#333;white-space:nowrap;left:202.46px;transform-origin:0 50%;transform:scaleX(0.87);">10:10a</div>
<div style="position:absolute;top:471.26px;height:8.07px;line-height:8.07px;font-size:6.21px;color:#333;white-space:nowrap;left:244.65px;transform-origin:0 50%;transform:scaleX(0.87);">10:10:30a</div>
<div style="position:absolute;top:471.26px;height:8.07px;line-height:8.07px;font-size:6.21px;color:#333;white-space:nowrap;left:286.84px;transform-origin:0 50%;transform:scaleX(0.87);">10:11a</div>
<div style="position:absolute;top:471.26px;height:8.07px;line-height:8.07px;font-size:6.21px;color:#333;white-space:nowrap;left:329.03px;transform-origin:0 50%;transform:scaleX(0.87);">10:11:30a</div>
<div style="position:absolute;top:471.26px;height:8.07px;line-height:8.07px;font-size:6.21px;color:#333;white-space:nowrap;left:371.22px;transform-origin:0 50%;transform:scaleX(0.87);">10:12a</div>
<div style="position:absolute;top:471.26px;height:8.07px;line-height:8.07px;font-size:6.21px;color:#333;white-space:nowrap;left:413.41px;transform-origin:0 50%;transform:scaleX(0.87);">10:12:30a</div>
<div style="position:absolute;top:471.26px;height:8.07px;line-height:8.07px;font-size:6.21px;color:#333;white-space:nowrap;left:455.60px;transform-origin:0 50%;transform:scaleX(0.87);">10:13a</div>
<div style="position:absolute;top:471.26px;height:8.07px;line-height:8.07px;font-size:6.21px;color:#333;white-space:nowrap;left:497.79px;transform-origin:0 50%;transform:scaleX(0.87);">10:13:30a</div>
<div style="position:absolute;top:471.26px;height:8.07px;line-height:8.07px;font-size:6.21px;color:#333;white-space:nowrap;left:539.98px;transform-origin:0 50%;transform:scaleX(0.87);">10:14a</div>
<div style="position:absolute;top:471.26px;height:8.07px;line-height:8.07px;font-size:6.21px;color:#333;white-space:nowrap;left:582.17px;transform-origin:0 50%;transform:scaleX(0.87);">10:14:30a</div>
<div style="position:absolute;top:471.26px;height:8.07px;line-height:8.07px;font-size:6.21px;color:#333;white-space:nowrap;left:624.36px;transform-origin:0 50%;transform:scaleX(0.87);">10:15a</div>
<div style="position:absolute;top:471.26px;height:8.07px;line-height:8.07px;font-size:6.21px;color:#333;white-space:nowrap;left:666.55px;transform-origin:0 50%;transform:scaleX(0.87);">10:15:30a</div>
<div style="position:absolute;top:471.26px;height:8.07px;line-height:8.07px;font-size:6.21px;color:#333;white-space:nowrap;left:708.74px;transform-origin:0 50%;transform:scaleX(0.87);">10:16a</div>
<div style="position:absolute;top:471.26px;height:8.07px;line-height:8.07px;font-size:6.21px;color:#333;white-space:nowrap;left:750.93px;transform-origin:0 50%;transform:scaleX(0.87);">10:16:30a</div>
<div style="position:absolute;top:471.26px;height:8.07px;line-height:8.07px;font-size:6.21px;color:#333;white-space:nowrap;left:793.12px;transform-origin:0 50%;transform:scaleX(0.87);">10:17:00a</div>
<div style="position:absolute;top:471.26px;height:8.07px;line-height:8.07px;font-size:6.21px;color:#333;white-space:nowrap;left:835.31px;transform-origin:0 50%;transform:scaleX(0.87);">10:17:30a</div>
<div style="position:absolute;top:471.26px;height:8.07px;line-height:8.07px;font-size:6.21px;color:#333;white-space:nowrap;right:114.80px;transform-origin:100% 50%;transform:scaleX(0.87);">10</div>
</body></html>
